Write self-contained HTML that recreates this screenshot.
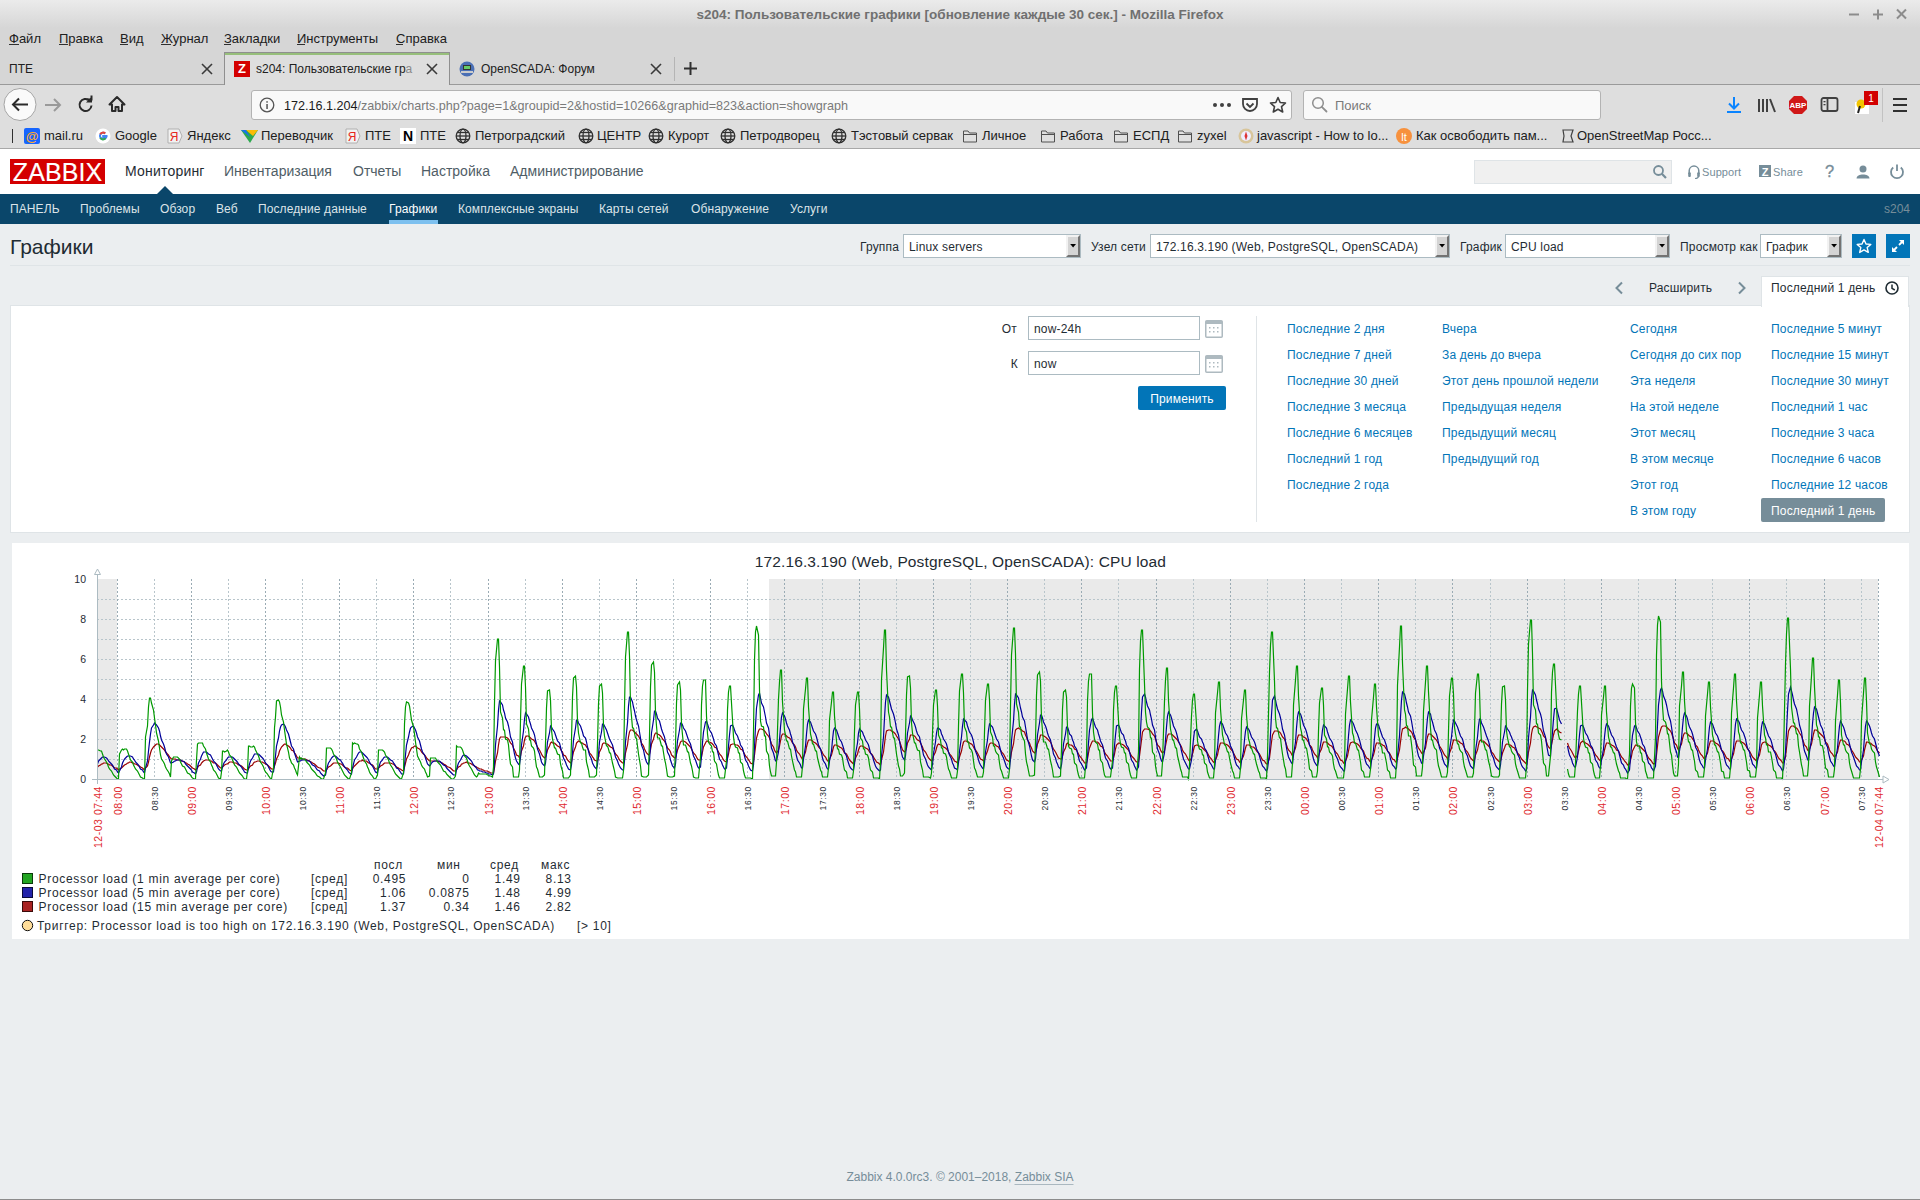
<!DOCTYPE html>
<html><head><meta charset="utf-8"><title>s204</title>
<style>
html,body{margin:0;padding:0;width:1920px;height:1200px;overflow:hidden;background:#ebeef0;font-family:"Liberation Sans", sans-serif;}
.t{position:absolute;white-space:pre;font-family:"Liberation Sans", sans-serif;}
.r{position:absolute;}
svg{position:absolute;overflow:visible;}
</style></head><body>
<div class="r" style="left:0px;top:0px;width:1920px;height:148px;background:linear-gradient(#ebebeb 0px,#d6d6d6 28px,#d6d6d6 148px);"></div><div class="t" style="left:960px;transform:translateX(-50%);top:7.74px;font-size:13.5px;line-height:13.5px;color:#707070;font-weight:bold;">s204: Пользовательские графики [обновление каждые 30 сек.] - Mozilla Firefox</div><svg style="left:1846px;top:6.5px" width="70" height="14"><g stroke="#8c8c8c" stroke-width="2" fill="none"><line x1="3" y1="7.5" x2="13" y2="7.5"/><line x1="27" y1="7.5" x2="37" y2="7.5"/><line x1="32" y1="2.5" x2="32" y2="12.5"/><line x1="51" y1="2.5" x2="60" y2="11.5"/><line x1="60" y1="2.5" x2="51" y2="11.5"/></g></svg><div class="t" style="left:9px;top:32.30px;font-size:13px;line-height:13px;color:#202020;font-weight:normal;">Файл</div><div class="t" style="left:59px;top:32.30px;font-size:13px;line-height:13px;color:#202020;font-weight:normal;">Правка</div><div class="t" style="left:120px;top:32.30px;font-size:13px;line-height:13px;color:#202020;font-weight:normal;">Вид</div><div class="t" style="left:161px;top:32.30px;font-size:13px;line-height:13px;color:#202020;font-weight:normal;">Журнал</div><div class="t" style="left:224px;top:32.30px;font-size:13px;line-height:13px;color:#202020;font-weight:normal;">Закладки</div><div class="t" style="left:297px;top:32.30px;font-size:13px;line-height:13px;color:#202020;font-weight:normal;">Инструменты</div><div class="t" style="left:396px;top:32.30px;font-size:13px;line-height:13px;color:#202020;font-weight:normal;">Справка</div><div class="r" style="left:9px;top:44px;width:10px;height:1px;background:#303030;"></div><div class="r" style="left:59px;top:44px;width:9px;height:1px;background:#303030;"></div><div class="r" style="left:120px;top:44px;width:8px;height:1px;background:#303030;"></div><div class="r" style="left:161px;top:44px;width:10px;height:1px;background:#303030;"></div><div class="r" style="left:224px;top:44px;width:7px;height:1px;background:#303030;"></div><div class="r" style="left:297px;top:44px;width:8px;height:1px;background:#303030;"></div><div class="r" style="left:396px;top:44px;width:7px;height:1px;background:#303030;"></div><div class="r" style="left:0px;top:84px;width:1920px;height:1px;background:#9a9a9a;"></div><div class="r" style="left:224px;top:52px;width:226px;height:33px;background:#dedede;box-sizing:border-box;border:1px solid #8f8f8f;border-bottom:none;"></div><div class="r" style="left:225px;top:53px;width:224px;height:2px;background:#97bf7b;"></div><div class="r" style="left:0px;top:85px;width:1920px;height:63px;background:#dedede;"></div><div class="r" style="left:0px;top:148px;width:1920px;height:1px;background:#a8a8a8;"></div><div class="t" style="left:9px;top:62.93px;font-size:12px;line-height:12px;color:#202020;font-weight:normal;">ПТЕ</div><div class="t" style="left:256px;top:62.93px;font-size:12px;line-height:12px;color:#202020;font-weight:normal;">s204: Пользовательские гр<span style="color:#8a8a8a">а</span></div><div class="t" style="left:481px;top:62.93px;font-size:12px;line-height:12px;color:#202020;font-weight:normal;">OpenSCADA: Форум</div><svg style="left:201px;top:63px" width="12" height="12"><g stroke="#3a3a3a" stroke-width="1.6"><line x1="1" y1="1" x2="11" y2="11"/><line x1="11" y1="1" x2="1" y2="11"/></g></svg><svg style="left:426px;top:63px" width="12" height="12"><g stroke="#3a3a3a" stroke-width="1.6"><line x1="1" y1="1" x2="11" y2="11"/><line x1="11" y1="1" x2="1" y2="11"/></g></svg><svg style="left:650px;top:63px" width="12" height="12"><g stroke="#3a3a3a" stroke-width="1.6"><line x1="1" y1="1" x2="11" y2="11"/><line x1="11" y1="1" x2="1" y2="11"/></g></svg><div class="r" style="left:234px;top:61px;width:16px;height:16px;background:#d40000;"></div><div class="t" style="left:242px;transform:translateX(-50%);top:61.80px;font-size:13px;line-height:13px;color:#fff;font-weight:bold;">Z</div><svg style="left:459px;top:61px" width="16" height="16"><circle cx="8" cy="8" r="7.5" fill="#4a6fb5"/><rect x="4" y="4" width="8" height="5" fill="#333"/><rect x="5" y="5" width="6" height="3" fill="#6c6"/><rect x="2" y="10" width="12" height="2" fill="#ccc"/></svg><div class="r" style="left:674px;top:57px;width:1px;height:24px;background:#b5b5b5;"></div><svg style="left:683px;top:61px" width="15" height="15"><g stroke="#303030" stroke-width="2"><line x1="7.5" y1="1" x2="7.5" y2="14"/><line x1="1" y1="7.5" x2="14" y2="7.5"/></g></svg><svg style="left:2px;top:87px" width="36" height="36"><circle cx="18" cy="17.5" r="16" fill="#fafafa" stroke="#a5a5a5" stroke-width="1"/><g stroke="#2a2a2a" stroke-width="2" fill="none"><line x1="11" y1="17.5" x2="26" y2="17.5"/><polyline points="17,11.5 11,17.5 17,23.5"/></g></svg><svg style="left:44px;top:96px" width="18" height="18"><g stroke="#9a9a9a" stroke-width="2" fill="none"><line x1="1" y1="9" x2="16" y2="9"/><polyline points="10,3 16,9 10,15"/></g></svg><svg style="left:77px;top:96px" width="18" height="18"><g stroke="#2a2a2a" stroke-width="2" fill="none"><path d="M14.5 9.5 A6 6 0 1 1 12.5 4.5"/><polyline points="9.5,3.5 14.5,3.5 14.5,-0.5" /></g><polygon points="15,0.5 15,6.5 9,6.5" fill="#2a2a2a"/></svg><svg style="left:108px;top:95px" width="18" height="18"><path d="M9 2 L16.5 9.5 L14 9.5 L14 16 L10.5 16 L10.5 12 L7.5 12 L7.5 16 L4 16 L4 9.5 L1.5 9.5 Z" fill="none" stroke="#2a2a2a" stroke-width="2" stroke-linejoin="round"/></svg><div class="r" style="left:251px;top:90px;width:1041px;height:30px;background:#f9f9f9;box-sizing:border-box;border:1px solid #b3b3b3;border-radius:3px;"></div><svg style="left:259px;top:97px" width="16" height="16"><circle cx="8" cy="8" r="6.8" fill="none" stroke="#555" stroke-width="1.3"/><rect x="7.3" y="7" width="1.5" height="5" fill="#555"/><rect x="7.3" y="4.2" width="1.5" height="1.5" fill="#555"/></svg><div class="t" style="left:284px;top:100.16px;font-size:12.6px;line-height:12.6px;color:#1a1a1a;font-weight:normal;">172.16.1.204<span style="color:#7a7a7a">/zabbix/charts.php?page=1&amp;groupid=2&amp;hostid=10266&amp;graphid=823&amp;action=showgraph</span></div><svg style="left:1212px;top:98px" width="20" height="14"><circle cx="3" cy="7" r="2" fill="#404040"/><circle cx="10" cy="7" r="2" fill="#404040"/><circle cx="17" cy="7" r="2" fill="#404040"/></svg><svg style="left:1241px;top:96px" width="18" height="18"><path d="M2 3 H16 V8 A7 7 0 0 1 2 8 Z" fill="none" stroke="#404040" stroke-width="1.8"/><polyline points="5.5,7.5 9,11 12.5,7.5" fill="none" stroke="#404040" stroke-width="1.8"/></svg><svg style="left:1269px;top:96px" width="18" height="18"><polygon points="9,1.5 11.2,6.5 16.5,7 12.5,10.6 13.7,16 9,13.2 4.3,16 5.5,10.6 1.5,7 6.8,6.5" fill="none" stroke="#404040" stroke-width="1.6" stroke-linejoin="round"/></svg><div class="r" style="left:1303px;top:90px;width:298px;height:30px;background:#f9f9f9;box-sizing:border-box;border:1px solid #b3b3b3;border-radius:3px;"></div><svg style="left:1311px;top:96px" width="18" height="18"><circle cx="7" cy="7" r="5.3" fill="none" stroke="#8e8e8e" stroke-width="1.5"/><line x1="10.8" y1="10.8" x2="15.5" y2="15.5" stroke="#8e8e8e" stroke-width="1.8" stroke-linecap="round"/></svg><div class="t" style="left:1335px;top:99.00px;font-size:13px;line-height:13px;color:#7a7a7a;font-weight:normal;">Поиск</div><svg style="left:1724px;top:95px" width="20" height="20"><g stroke="#0a84ff" stroke-width="2" fill="none"><line x1="10" y1="2" x2="10" y2="13"/><polyline points="5,8.5 10,13.5 15,8.5"/><line x1="3" y1="17" x2="17" y2="17"/></g></svg><svg style="left:1757px;top:96px" width="20" height="18"><g fill="#404040"><rect x="1" y="3" width="2" height="13"/><rect x="5" y="3" width="2" height="13"/><rect x="9" y="3" width="2" height="13"/></g><line x1="13" y1="3" x2="18" y2="16" stroke="#404040" stroke-width="2"/></svg><svg style="left:1788px;top:95px" width="20" height="20"><polygon points="6,1 14,1 19,6 19,14 14,19 6,19 1,14 1,6" fill="#d01818"/><text x="10" y="13.3" font-family="Liberation Sans" font-weight="bold" font-size="8" fill="#fff" text-anchor="middle">ABP</text></svg><svg style="left:1820px;top:96px" width="20" height="18"><rect x="1.5" y="2" width="16" height="13" rx="2" fill="none" stroke="#404040" stroke-width="1.8"/><line x1="7.5" y1="2" x2="7.5" y2="15" stroke="#404040" stroke-width="1.8"/><rect x="3.5" y="5" width="2" height="1.3" fill="#404040"/><rect x="3.5" y="8" width="2" height="1.3" fill="#404040"/></svg><svg style="left:1853px;top:90px" width="28" height="24"><rect x="2" y="12" width="14" height="12" fill="#fff"/><circle cx="8" cy="14" r="4.5" fill="#f2c400"/><line x1="7" y1="16" x2="5" y2="23" stroke="#222" stroke-width="2"/><rect x="11" y="1" width="14" height="14" fill="#d20000"/><text x="18" y="12" font-family="Liberation Sans" font-size="10" fill="#fff" text-anchor="middle">1</text></svg><div class="r" style="left:1882px;top:88px;width:1px;height:34px;background:#c2c2c2;"></div><svg style="left:1892px;top:97px" width="18" height="16"><g fill="#303030"><rect x="1" y="1" width="14" height="2"/><rect x="1" y="7" width="14" height="2"/><rect x="1" y="13" width="14" height="2"/></g></svg><div class="r" style="left:12px;top:129px;width:1px;height:14px;background:#303030;"></div><div class="t" style="left:44px;top:129.30px;font-size:13px;line-height:13px;color:#202020;font-weight:normal;">mail.ru</div><svg style="left:24px;top:128px" width="16" height="16"><rect width="16" height="16" rx="2" fill="#1665ff"/><text x="8" y="12.5" font-family="Liberation Sans" font-weight="bold" font-size="13" fill="#ffa930" text-anchor="middle">@</text></svg><div class="t" style="left:115px;top:129.30px;font-size:13px;line-height:13px;color:#202020;font-weight:normal;">Google</div><svg style="left:95px;top:128px" width="16" height="16"><circle cx="8" cy="8" r="7.5" fill="#fff"/><path d="M12.5 8 H8.2 V9.6 H10.9 A3.2 3.2 0 1 1 10.2 5.4" fill="none" stroke="#4285f4" stroke-width="2"/><path d="M5.2 6.3 A3.2 3.2 0 0 1 10.2 5.4" fill="none" stroke="#ea4335" stroke-width="2"/><path d="M5.2 9.8 A3.2 3.2 0 0 0 10.5 10.2" fill="none" stroke="#34a853" stroke-width="2"/></svg><div class="t" style="left:187px;top:129.30px;font-size:13px;line-height:13px;color:#202020;font-weight:normal;">Яндекс</div><svg style="left:167px;top:128px" width="16" height="16"><path d="M1 1 H12 L15 8 L12 15 H1 Z" fill="#f2f2f2" stroke="#b0b0b0" stroke-width="1"/><text x="7" y="13" font-family="Liberation Sans" font-size="12" fill="#e52620" text-anchor="middle">Я</text></svg><div class="t" style="left:261px;top:129.30px;font-size:13px;line-height:13px;color:#202020;font-weight:normal;">Переводчик</div><svg style="left:241px;top:128px" width="17" height="16"><polygon points="0,2 17,2 9,15" fill="#2da94f"/><polygon points="5,2 17,2 12,8" fill="#fbbc04"/><polygon points="0,2 5,2 9,9" fill="#1a73e8"/></svg><div class="t" style="left:365px;top:129.30px;font-size:13px;line-height:13px;color:#202020;font-weight:normal;">ПТЕ</div><svg style="left:345px;top:128px" width="16" height="16"><path d="M1 1 H12 L15 8 L12 15 H1 Z" fill="#f2f2f2" stroke="#b0b0b0" stroke-width="1"/><text x="7" y="13" font-family="Liberation Sans" font-size="12" fill="#e52620" text-anchor="middle">Я</text></svg><div class="t" style="left:420px;top:129.30px;font-size:13px;line-height:13px;color:#202020;font-weight:normal;">ПТЕ</div><svg style="left:400px;top:128px" width="16" height="16"><rect width="16" height="16" fill="#fff"/><text x="8" y="13" font-family="Liberation Sans" font-weight="bold" font-size="14" fill="#000" text-anchor="middle">N</text></svg><div class="t" style="left:475px;top:129.30px;font-size:13px;line-height:13px;color:#202020;font-weight:normal;">Петроградский</div><svg style="left:455px;top:128px" width="16" height="16"><g fill="none" stroke="#303030" stroke-width="1.3"><circle cx="8" cy="8" r="6.8"/><ellipse cx="8" cy="8" rx="3" ry="6.8"/><line x1="1.2" y1="8" x2="14.8" y2="8"/><line x1="2.2" y1="4.5" x2="13.8" y2="4.5"/><line x1="2.2" y1="11.5" x2="13.8" y2="11.5"/></g></svg><div class="t" style="left:597px;top:129.30px;font-size:13px;line-height:13px;color:#202020;font-weight:normal;">ЦЕНТР</div><svg style="left:578px;top:128px" width="16" height="16"><g fill="none" stroke="#303030" stroke-width="1.3"><circle cx="8" cy="8" r="6.8"/><ellipse cx="8" cy="8" rx="3" ry="6.8"/><line x1="1.2" y1="8" x2="14.8" y2="8"/><line x1="2.2" y1="4.5" x2="13.8" y2="4.5"/><line x1="2.2" y1="11.5" x2="13.8" y2="11.5"/></g></svg><div class="t" style="left:668px;top:129.30px;font-size:13px;line-height:13px;color:#202020;font-weight:normal;">Курорт</div><svg style="left:648px;top:128px" width="16" height="16"><g fill="none" stroke="#303030" stroke-width="1.3"><circle cx="8" cy="8" r="6.8"/><ellipse cx="8" cy="8" rx="3" ry="6.8"/><line x1="1.2" y1="8" x2="14.8" y2="8"/><line x1="2.2" y1="4.5" x2="13.8" y2="4.5"/><line x1="2.2" y1="11.5" x2="13.8" y2="11.5"/></g></svg><div class="t" style="left:740px;top:129.30px;font-size:13px;line-height:13px;color:#202020;font-weight:normal;">Петродворец</div><svg style="left:720px;top:128px" width="16" height="16"><g fill="none" stroke="#303030" stroke-width="1.3"><circle cx="8" cy="8" r="6.8"/><ellipse cx="8" cy="8" rx="3" ry="6.8"/><line x1="1.2" y1="8" x2="14.8" y2="8"/><line x1="2.2" y1="4.5" x2="13.8" y2="4.5"/><line x1="2.2" y1="11.5" x2="13.8" y2="11.5"/></g></svg><div class="t" style="left:851px;top:129.30px;font-size:13px;line-height:13px;color:#202020;font-weight:normal;">Тэстовый сервак</div><svg style="left:831px;top:128px" width="16" height="16"><g fill="none" stroke="#303030" stroke-width="1.3"><circle cx="8" cy="8" r="6.8"/><ellipse cx="8" cy="8" rx="3" ry="6.8"/><line x1="1.2" y1="8" x2="14.8" y2="8"/><line x1="2.2" y1="4.5" x2="13.8" y2="4.5"/><line x1="2.2" y1="11.5" x2="13.8" y2="11.5"/></g></svg><div class="t" style="left:982px;top:129.30px;font-size:13px;line-height:13px;color:#202020;font-weight:normal;">Личное</div><svg style="left:962px;top:128px" width="16" height="16"><path d="M1.5 3 H6 L7.5 5 H14.5 V14 H1.5 Z" fill="#e0e0e0" stroke="#505050" stroke-width="1"/><line x1="1.5" y1="6.5" x2="14.5" y2="6.5" stroke="#505050" stroke-width="1"/></svg><div class="t" style="left:1060px;top:129.30px;font-size:13px;line-height:13px;color:#202020;font-weight:normal;">Работа</div><svg style="left:1040px;top:128px" width="16" height="16"><path d="M1.5 3 H6 L7.5 5 H14.5 V14 H1.5 Z" fill="#e0e0e0" stroke="#505050" stroke-width="1"/><line x1="1.5" y1="6.5" x2="14.5" y2="6.5" stroke="#505050" stroke-width="1"/></svg><div class="t" style="left:1133px;top:129.30px;font-size:13px;line-height:13px;color:#202020;font-weight:normal;">ЕСПД</div><svg style="left:1113px;top:128px" width="16" height="16"><path d="M1.5 3 H6 L7.5 5 H14.5 V14 H1.5 Z" fill="#e0e0e0" stroke="#505050" stroke-width="1"/><line x1="1.5" y1="6.5" x2="14.5" y2="6.5" stroke="#505050" stroke-width="1"/></svg><div class="t" style="left:1197px;top:129.30px;font-size:13px;line-height:13px;color:#202020;font-weight:normal;">zyxel</div><svg style="left:1177px;top:128px" width="16" height="16"><path d="M1.5 3 H6 L7.5 5 H14.5 V14 H1.5 Z" fill="#e0e0e0" stroke="#505050" stroke-width="1"/><line x1="1.5" y1="6.5" x2="14.5" y2="6.5" stroke="#505050" stroke-width="1"/></svg><div class="t" style="left:1257px;top:129.30px;font-size:13px;line-height:13px;color:#202020;font-weight:normal;">javascript - How to lo...</div><svg style="left:1238px;top:128px" width="16" height="16"><circle cx="8" cy="8" r="7.5" fill="#d8c59a"/><circle cx="8" cy="8" r="5" fill="#eef"/><polygon points="8,3.5 9.5,8 8,12.5 6.5,8" fill="#d33"/></svg><div class="t" style="left:1416px;top:129.30px;font-size:13px;line-height:13px;color:#202020;font-weight:normal;">Как освободить пам...</div><svg style="left:1396px;top:128px" width="16" height="16"><circle cx="8" cy="8" r="8" fill="#f7913d"/><text x="8" y="12.5" font-family="Liberation Sans" font-size="11" fill="#fff" text-anchor="middle">lt</text></svg><div class="t" style="left:1577px;top:129.30px;font-size:13px;line-height:13px;color:#202020;font-weight:normal;">OpenStreetMap Росс...</div><svg style="left:1560px;top:128px" width="16" height="16"><path d="M3 2 H13 L11 8 L13 14 H3 L4 8 Z" fill="none" stroke="#404040" stroke-width="1.2"/></svg><div class="r" style="left:0px;top:149px;width:1920px;height:45px;background:#ffffff;"></div><div class="r" style="left:10px;top:159px;width:95px;height:25px;background:#d40000;"></div><div class="t" style="left:12.8px;top:159.5px;font-size:25px;line-height:25px;color:#fff;letter-spacing:0.1px;-webkit-text-stroke:0.15px #fff;">ZABBIX</div><div class="t" style="left:125px;top:164.17px;font-size:14px;line-height:14px;color:#1f2c33;font-weight:normal;letter-spacing:0.2px;">Мониторинг</div><div class="t" style="left:224px;top:164.17px;font-size:14px;line-height:14px;color:#4f5d66;font-weight:normal;">Инвентаризация</div><div class="t" style="left:353px;top:164.17px;font-size:14px;line-height:14px;color:#4f5d66;font-weight:normal;">Отчеты</div><div class="t" style="left:421px;top:164.17px;font-size:14px;line-height:14px;color:#4f5d66;font-weight:normal;">Настройка</div><div class="t" style="left:510px;top:164.17px;font-size:14px;line-height:14px;color:#4f5d66;font-weight:normal;">Администрирование</div><svg style="left:157px;top:186px" width="16" height="8"><polygon points="0,8 8,0 16,8" fill="#0a466a"/></svg><div class="r" style="left:1474px;top:160px;width:198px;height:24px;background:#f0f0f0;box-sizing:border-box;border:1px solid #dfe4e7;"></div><svg style="left:1652px;top:164px" width="16" height="16"><circle cx="6.5" cy="6.5" r="4.5" fill="none" stroke="#768d99" stroke-width="1.8"/><line x1="9.8" y1="9.8" x2="14" y2="14" stroke="#768d99" stroke-width="2.2"/></svg><svg style="left:1687px;top:164px" width="14" height="16"><path d="M2.2 10 V6.8 A4.8 4.8 0 0 1 11.8 6.8 V10" fill="none" stroke="#768d99" stroke-width="1.5"/><rect x="1.2" y="8.3" width="2.6" height="4.6" rx="1" fill="#768d99"/><rect x="10.2" y="8.3" width="2.6" height="4.6" rx="1" fill="#768d99"/><path d="M11.5 12.5 Q11 14.5 8 14.5" fill="none" stroke="#768d99" stroke-width="1.2"/></svg><div class="t" style="left:1702px;top:166.76px;font-size:11px;line-height:11px;color:#768d99;font-weight:normal;letter-spacing:0.1px;">Support</div><svg style="left:1759px;top:165px" width="12" height="12"><rect width="12" height="12" fill="#768d99"/><text x="6" y="10.5" font-family="Liberation Sans" font-weight="bold" font-size="11" fill="#fff" text-anchor="middle">Z</text></svg><div class="t" style="left:1773px;top:166.76px;font-size:11px;line-height:11px;color:#768d99;font-weight:normal;letter-spacing:0.1px;">Share</div><div class="t" style="left:1829.5px;transform:translateX(-50%);top:162.85px;font-size:16.5px;line-height:16.5px;color:#768d99;font-weight:normal;-webkit-text-stroke:0.3px #768d99;">?</div><svg style="left:1855px;top:164px" width="16" height="16"><circle cx="8" cy="5" r="3.5" fill="#768d99"/><path d="M1.5 14.5 C1.5 9 14.5 9 14.5 14.5 Z" fill="#768d99"/></svg><svg style="left:1889px;top:163px" width="16" height="16"><path d="M4.2 4.5 A6 6 0 1 0 11.8 4.5" fill="none" stroke="#768d99" stroke-width="1.8"/><line x1="8" y1="1.5" x2="8" y2="8" stroke="#768d99" stroke-width="1.8"/></svg><div class="r" style="left:0px;top:194px;width:1920px;height:30px;background:#0a466a;"></div><div class="t" style="left:10px;top:202.93px;font-size:12px;line-height:12px;color:#dce4e8;font-weight:normal;letter-spacing:0.1px;">ПАНЕЛЬ</div><div class="t" style="left:80px;top:202.93px;font-size:12px;line-height:12px;color:#dce4e8;font-weight:normal;letter-spacing:0.1px;">Проблемы</div><div class="t" style="left:160px;top:202.93px;font-size:12px;line-height:12px;color:#dce4e8;font-weight:normal;letter-spacing:0.1px;">Обзор</div><div class="t" style="left:216px;top:202.93px;font-size:12px;line-height:12px;color:#dce4e8;font-weight:normal;letter-spacing:0.1px;">Веб</div><div class="t" style="left:258px;top:202.93px;font-size:12px;line-height:12px;color:#dce4e8;font-weight:normal;letter-spacing:0.1px;">Последние данные</div><div class="t" style="left:458px;top:202.93px;font-size:12px;line-height:12px;color:#dce4e8;font-weight:normal;letter-spacing:0.1px;">Комплексные экраны</div><div class="t" style="left:599px;top:202.93px;font-size:12px;line-height:12px;color:#dce4e8;font-weight:normal;letter-spacing:0.1px;">Карты сетей</div><div class="t" style="left:691px;top:202.93px;font-size:12px;line-height:12px;color:#dce4e8;font-weight:normal;letter-spacing:0.1px;">Обнаружение</div><div class="t" style="left:790px;top:202.93px;font-size:12px;line-height:12px;color:#dce4e8;font-weight:normal;letter-spacing:0.1px;">Услуги</div><div class="t" style="left:389px;top:202.93px;font-size:12px;line-height:12px;color:#ffffff;font-weight:normal;letter-spacing:0.1px;">Графики</div><div class="r" style="left:389px;top:220px;width:49px;height:4px;background:#7dc0ef;"></div><div class="t" style="right:10px;top:202.93px;font-size:12px;line-height:12px;color:#768d99;font-weight:normal;">s204</div><div class="t" style="left:10px;top:236.26px;font-size:21px;line-height:21px;color:#1f2c33;font-weight:normal;">Графики</div><div class="t" style="left:860px;top:241.43px;font-size:12px;line-height:12px;color:#1f2c33;font-weight:normal;letter-spacing:0.17px;">Группа</div><div class="r" style="left:903px;top:234px;width:178px;height:24px;background:#fff;box-sizing:border-box;border:1px solid #acbbc2;"></div><div class="t" style="left:909px;top:241.43px;font-size:12px;line-height:12px;color:#1f2c33;font-weight:normal;letter-spacing:0.17px;">Linux servers</div><div class="r" style="left:1066px;top:235px;width:14px;height:22px;background:#d4d4d4;box-sizing:border-box;border-left:2px solid #f2f2f2;border-top:2px solid #f2f2f2;border-right:2px solid #737373;border-bottom:2px solid #737373;"></div><svg style="left:1070px;top:244px" width="7" height="4"><polygon points="0.2,0 6,0 3.1,3.6" fill="#000"/></svg><div class="t" style="left:1091px;top:241.43px;font-size:12px;line-height:12px;color:#1f2c33;font-weight:normal;letter-spacing:0.17px;">Узел сети</div><div class="r" style="left:1150px;top:234px;width:300px;height:24px;background:#fff;box-sizing:border-box;border:1px solid #acbbc2;"></div><div class="t" style="left:1156px;top:241.43px;font-size:12px;line-height:12px;color:#1f2c33;font-weight:normal;letter-spacing:0.17px;">172.16.3.190 (Web, PostgreSQL, OpenSCADA)</div><div class="r" style="left:1435px;top:235px;width:14px;height:22px;background:#d4d4d4;box-sizing:border-box;border-left:2px solid #f2f2f2;border-top:2px solid #f2f2f2;border-right:2px solid #737373;border-bottom:2px solid #737373;"></div><svg style="left:1439px;top:244px" width="7" height="4"><polygon points="0.2,0 6,0 3.1,3.6" fill="#000"/></svg><div class="t" style="left:1460px;top:241.43px;font-size:12px;line-height:12px;color:#1f2c33;font-weight:normal;letter-spacing:0.17px;">График</div><div class="r" style="left:1505px;top:234px;width:165px;height:24px;background:#fff;box-sizing:border-box;border:1px solid #acbbc2;"></div><div class="t" style="left:1511px;top:241.43px;font-size:12px;line-height:12px;color:#1f2c33;font-weight:normal;letter-spacing:0.17px;">CPU load</div><div class="r" style="left:1655px;top:235px;width:14px;height:22px;background:#d4d4d4;box-sizing:border-box;border-left:2px solid #f2f2f2;border-top:2px solid #f2f2f2;border-right:2px solid #737373;border-bottom:2px solid #737373;"></div><svg style="left:1659px;top:244px" width="7" height="4"><polygon points="0.2,0 6,0 3.1,3.6" fill="#000"/></svg><div class="t" style="left:1680px;top:241.43px;font-size:12px;line-height:12px;color:#1f2c33;font-weight:normal;letter-spacing:0.17px;">Просмотр как</div><div class="r" style="left:1760px;top:234px;width:82px;height:24px;background:#fff;box-sizing:border-box;border:1px solid #acbbc2;"></div><div class="t" style="left:1766px;top:241.43px;font-size:12px;line-height:12px;color:#1f2c33;font-weight:normal;letter-spacing:0.17px;">График</div><div class="r" style="left:1827px;top:235px;width:14px;height:22px;background:#d4d4d4;box-sizing:border-box;border-left:2px solid #f2f2f2;border-top:2px solid #f2f2f2;border-right:2px solid #737373;border-bottom:2px solid #737373;"></div><svg style="left:1831px;top:244px" width="7" height="4"><polygon points="0.2,0 6,0 3.1,3.6" fill="#000"/></svg><div class="r" style="left:1852px;top:234px;width:24px;height:24px;background:#0275b8;"></div><svg style="left:1856px;top:238px" width="16" height="16"><polygon points="8,1.5 10,6 14.8,6.4 11.2,9.6 12.3,14.4 8,11.9 3.7,14.4 4.8,9.6 1.2,6.4 6,6" fill="none" stroke="#fff" stroke-width="1.4" stroke-linejoin="round"/></svg><div class="r" style="left:1886px;top:234px;width:24px;height:24px;background:#0275b8;"></div><svg style="left:1890px;top:238px" width="16" height="16"><g stroke="#fff" stroke-width="1.8" fill="none"><line x1="9" y1="7" x2="13" y2="3"/><line x1="3" y1="13" x2="7" y2="9"/></g><polygon points="9,2 14,2 14,7" fill="#fff"/><polygon points="2,9 2,14 7,14" fill="#fff"/></svg><div class="r" style="left:10px;top:265px;width:1900px;height:1px;background:#dfe4e7;"></div><svg style="left:1613px;top:281px" width="12" height="14"><polyline points="9,1.5 3.5,7 9,12.5" fill="none" stroke="#768d99" stroke-width="2"/></svg><div class="t" style="left:1649px;top:282.43px;font-size:12px;line-height:12px;color:#1f2c33;font-weight:normal;letter-spacing:0.17px;">Расширить</div><svg style="left:1736px;top:281px" width="12" height="14"><polyline points="3,1.5 8.5,7 3,12.5" fill="none" stroke="#768d99" stroke-width="2"/></svg><div class="r" style="left:10px;top:305px;width:1900px;height:228px;background:#fff;box-sizing:border-box;border:1px solid #dfe4e7;"></div><div class="r" style="left:1761px;top:276px;width:148px;height:31px;background:#fff;box-sizing:border-box;border:1px solid #dfe4e7;border-bottom:none;"></div><div class="t" style="left:1771px;top:282.43px;font-size:12px;line-height:12px;color:#1f2c33;font-weight:normal;letter-spacing:0.17px;">Последний 1 день</div><svg style="left:1884px;top:280px" width="16" height="16"><circle cx="8" cy="8" r="6" fill="none" stroke="#1f2c33" stroke-width="1.6"/><polyline points="8,4.5 8,8.3 10.8,10" fill="none" stroke="#1f2c33" stroke-width="1.5"/></svg><div class="t" style="right:903px;top:323.43px;font-size:12px;line-height:12px;color:#1f2c33;font-weight:normal;letter-spacing:0.17px;">От</div><div class="t" style="right:902px;top:358.43px;font-size:12px;line-height:12px;color:#1f2c33;font-weight:normal;letter-spacing:0.17px;">К</div><div class="r" style="left:1028px;top:316px;width:172px;height:24px;background:#fff;box-sizing:border-box;border:1px solid #acbbc2;"></div><div class="t" style="left:1034px;top:323.43px;font-size:12px;line-height:12px;color:#1f2c33;font-weight:normal;letter-spacing:0.17px;">now-24h</div><svg style="left:1205px;top:320px" width="18" height="18"><rect x="0.75" y="0.75" width="16.5" height="16.5" rx="1" fill="#fff" stroke="#aebac0" stroke-width="1.5"/><rect x="1" y="1" width="16" height="3" fill="#aebac0"/><g fill="#aebac0"><rect x="4" y="7" width="1.5" height="1.5"/><rect x="8" y="7" width="1.5" height="1.5"/><rect x="12" y="7" width="1.5" height="1.5"/><rect x="4" y="11" width="1.5" height="1.5"/><rect x="8" y="11" width="1.5" height="1.5"/><rect x="12" y="11" width="1.5" height="1.5"/></g></svg><div class="r" style="left:1028px;top:351px;width:172px;height:24px;background:#fff;box-sizing:border-box;border:1px solid #acbbc2;"></div><div class="t" style="left:1034px;top:358.43px;font-size:12px;line-height:12px;color:#1f2c33;font-weight:normal;letter-spacing:0.17px;">now</div><svg style="left:1205px;top:355px" width="18" height="18"><rect x="0.75" y="0.75" width="16.5" height="16.5" rx="1" fill="#fff" stroke="#aebac0" stroke-width="1.5"/><rect x="1" y="1" width="16" height="3" fill="#aebac0"/><g fill="#aebac0"><rect x="4" y="7" width="1.5" height="1.5"/><rect x="8" y="7" width="1.5" height="1.5"/><rect x="12" y="7" width="1.5" height="1.5"/><rect x="4" y="11" width="1.5" height="1.5"/><rect x="8" y="11" width="1.5" height="1.5"/><rect x="12" y="11" width="1.5" height="1.5"/></g></svg><div class="r" style="left:1138px;top:386px;width:88px;height:24px;background:#0275b8;border-radius:2px;"></div><div class="t" style="left:1182px;transform:translateX(-50%);top:393.43px;font-size:12px;line-height:12px;color:#fff;font-weight:normal;letter-spacing:0.17px;">Применить</div><div class="r" style="left:1256px;top:316px;width:1px;height:206px;background:#dfe4e7;"></div><div class="t" style="left:1287px;top:323.43px;font-size:12px;line-height:12px;color:#0275b8;font-weight:normal;letter-spacing:0.17px;">Последние 2 дня</div><div class="t" style="left:1287px;top:349.43px;font-size:12px;line-height:12px;color:#0275b8;font-weight:normal;letter-spacing:0.17px;">Последние 7 дней</div><div class="t" style="left:1287px;top:375.43px;font-size:12px;line-height:12px;color:#0275b8;font-weight:normal;letter-spacing:0.17px;">Последние 30 дней</div><div class="t" style="left:1287px;top:401.43px;font-size:12px;line-height:12px;color:#0275b8;font-weight:normal;letter-spacing:0.17px;">Последние 3 месяца</div><div class="t" style="left:1287px;top:427.43px;font-size:12px;line-height:12px;color:#0275b8;font-weight:normal;letter-spacing:0.17px;">Последние 6 месяцев</div><div class="t" style="left:1287px;top:453.43px;font-size:12px;line-height:12px;color:#0275b8;font-weight:normal;letter-spacing:0.17px;">Последний 1 год</div><div class="t" style="left:1287px;top:479.43px;font-size:12px;line-height:12px;color:#0275b8;font-weight:normal;letter-spacing:0.17px;">Последние 2 года</div><div class="t" style="left:1442px;top:323.43px;font-size:12px;line-height:12px;color:#0275b8;font-weight:normal;letter-spacing:0.17px;">Вчера</div><div class="t" style="left:1442px;top:349.43px;font-size:12px;line-height:12px;color:#0275b8;font-weight:normal;letter-spacing:0.17px;">За день до вчера</div><div class="t" style="left:1442px;top:375.43px;font-size:12px;line-height:12px;color:#0275b8;font-weight:normal;letter-spacing:0.17px;">Этот день прошлой недели</div><div class="t" style="left:1442px;top:401.43px;font-size:12px;line-height:12px;color:#0275b8;font-weight:normal;letter-spacing:0.17px;">Предыдущая неделя</div><div class="t" style="left:1442px;top:427.43px;font-size:12px;line-height:12px;color:#0275b8;font-weight:normal;letter-spacing:0.17px;">Предыдущий месяц</div><div class="t" style="left:1442px;top:453.43px;font-size:12px;line-height:12px;color:#0275b8;font-weight:normal;letter-spacing:0.17px;">Предыдущий год</div><div class="t" style="left:1630px;top:323.43px;font-size:12px;line-height:12px;color:#0275b8;font-weight:normal;letter-spacing:0.17px;">Сегодня</div><div class="t" style="left:1630px;top:349.43px;font-size:12px;line-height:12px;color:#0275b8;font-weight:normal;letter-spacing:0.17px;">Сегодня до сих пор</div><div class="t" style="left:1630px;top:375.43px;font-size:12px;line-height:12px;color:#0275b8;font-weight:normal;letter-spacing:0.17px;">Эта неделя</div><div class="t" style="left:1630px;top:401.43px;font-size:12px;line-height:12px;color:#0275b8;font-weight:normal;letter-spacing:0.17px;">На этой неделе</div><div class="t" style="left:1630px;top:427.43px;font-size:12px;line-height:12px;color:#0275b8;font-weight:normal;letter-spacing:0.17px;">Этот месяц</div><div class="t" style="left:1630px;top:453.43px;font-size:12px;line-height:12px;color:#0275b8;font-weight:normal;letter-spacing:0.17px;">В этом месяце</div><div class="t" style="left:1630px;top:479.43px;font-size:12px;line-height:12px;color:#0275b8;font-weight:normal;letter-spacing:0.17px;">Этот год</div><div class="t" style="left:1630px;top:505.43px;font-size:12px;line-height:12px;color:#0275b8;font-weight:normal;letter-spacing:0.17px;">В этом году</div><div class="t" style="left:1771px;top:323.43px;font-size:12px;line-height:12px;color:#0275b8;font-weight:normal;letter-spacing:0.17px;">Последние 5 минут</div><div class="t" style="left:1771px;top:349.43px;font-size:12px;line-height:12px;color:#0275b8;font-weight:normal;letter-spacing:0.17px;">Последние 15 минут</div><div class="t" style="left:1771px;top:375.43px;font-size:12px;line-height:12px;color:#0275b8;font-weight:normal;letter-spacing:0.17px;">Последние 30 минут</div><div class="t" style="left:1771px;top:401.43px;font-size:12px;line-height:12px;color:#0275b8;font-weight:normal;letter-spacing:0.17px;">Последний 1 час</div><div class="t" style="left:1771px;top:427.43px;font-size:12px;line-height:12px;color:#0275b8;font-weight:normal;letter-spacing:0.17px;">Последние 3 часа</div><div class="t" style="left:1771px;top:453.43px;font-size:12px;line-height:12px;color:#0275b8;font-weight:normal;letter-spacing:0.17px;">Последние 6 часов</div><div class="t" style="left:1771px;top:479.43px;font-size:12px;line-height:12px;color:#0275b8;font-weight:normal;letter-spacing:0.17px;">Последние 12 часов</div><div class="r" style="left:1761px;top:498px;width:124px;height:24px;background:#768d99;border-radius:2px;"></div><div class="t" style="left:1771px;top:505.43px;font-size:12px;line-height:12px;color:#fff;font-weight:normal;letter-spacing:0.17px;">Последний 1 день</div><div class="t" style="left:960px;transform:translateX(-50%);top:1171.43px;font-size:12px;line-height:12px;color:#768d99;font-weight:normal;">Zabbix 4.0.0rc3. © 2001–2018, <span style="border-bottom:1px solid #aab8c0">Zabbix SIA</span></div><div class="r" style="left:0px;top:1199px;width:1920px;height:1px;background:#8c8c8c;"></div><div class="r" style="left:12px;top:543px;width:1897px;height:396px;background:#fff;"></div><svg style="left:0px;top:0px" width="1920" height="1200" shape-rendering="crispEdges"><rect x="98" y="579" width="19" height="200" fill="#eaeaea"/><rect x="769" y="579" width="1109" height="200" fill="#eaeaea"/><line x1="97" y1="759.5" x2="1879" y2="759.5" stroke="#b8c5cb" stroke-width="1" stroke-dasharray="2 2"/><line x1="97" y1="739.5" x2="1879" y2="739.5" stroke="#b8c5cb" stroke-width="1" stroke-dasharray="2 2"/><line x1="97" y1="719.5" x2="1879" y2="719.5" stroke="#b8c5cb" stroke-width="1" stroke-dasharray="2 2"/><line x1="97" y1="699.5" x2="1879" y2="699.5" stroke="#b8c5cb" stroke-width="1" stroke-dasharray="2 2"/><line x1="97" y1="679.5" x2="1879" y2="679.5" stroke="#b8c5cb" stroke-width="1" stroke-dasharray="2 2"/><line x1="97" y1="659.5" x2="1879" y2="659.5" stroke="#b8c5cb" stroke-width="1" stroke-dasharray="2 2"/><line x1="97" y1="639.5" x2="1879" y2="639.5" stroke="#b8c5cb" stroke-width="1" stroke-dasharray="2 2"/><line x1="97" y1="619.5" x2="1879" y2="619.5" stroke="#b8c5cb" stroke-width="1" stroke-dasharray="2 2"/><line x1="97" y1="599.5" x2="1879" y2="599.5" stroke="#b8c5cb" stroke-width="1" stroke-dasharray="2 2"/><line x1="117.5" y1="579" x2="117.5" y2="779" stroke="#9aabb4" stroke-width="1" stroke-dasharray="2 2"/><line x1="154.5" y1="579" x2="154.5" y2="779" stroke="#b8c5cb" stroke-width="1" stroke-dasharray="2 2"/><line x1="191.5" y1="579" x2="191.5" y2="779" stroke="#9aabb4" stroke-width="1" stroke-dasharray="2 2"/><line x1="228.5" y1="579" x2="228.5" y2="779" stroke="#b8c5cb" stroke-width="1" stroke-dasharray="2 2"/><line x1="265.5" y1="579" x2="265.5" y2="779" stroke="#9aabb4" stroke-width="1" stroke-dasharray="2 2"/><line x1="302.5" y1="579" x2="302.5" y2="779" stroke="#b8c5cb" stroke-width="1" stroke-dasharray="2 2"/><line x1="339.5" y1="579" x2="339.5" y2="779" stroke="#9aabb4" stroke-width="1" stroke-dasharray="2 2"/><line x1="376.5" y1="579" x2="376.5" y2="779" stroke="#b8c5cb" stroke-width="1" stroke-dasharray="2 2"/><line x1="413.5" y1="579" x2="413.5" y2="779" stroke="#9aabb4" stroke-width="1" stroke-dasharray="2 2"/><line x1="450.5" y1="579" x2="450.5" y2="779" stroke="#b8c5cb" stroke-width="1" stroke-dasharray="2 2"/><line x1="488.5" y1="579" x2="488.5" y2="779" stroke="#9aabb4" stroke-width="1" stroke-dasharray="2 2"/><line x1="525.5" y1="579" x2="525.5" y2="779" stroke="#b8c5cb" stroke-width="1" stroke-dasharray="2 2"/><line x1="562.5" y1="579" x2="562.5" y2="779" stroke="#9aabb4" stroke-width="1" stroke-dasharray="2 2"/><line x1="599.5" y1="579" x2="599.5" y2="779" stroke="#b8c5cb" stroke-width="1" stroke-dasharray="2 2"/><line x1="636.5" y1="579" x2="636.5" y2="779" stroke="#9aabb4" stroke-width="1" stroke-dasharray="2 2"/><line x1="673.5" y1="579" x2="673.5" y2="779" stroke="#b8c5cb" stroke-width="1" stroke-dasharray="2 2"/><line x1="710.5" y1="579" x2="710.5" y2="779" stroke="#9aabb4" stroke-width="1" stroke-dasharray="2 2"/><line x1="747.5" y1="579" x2="747.5" y2="779" stroke="#b8c5cb" stroke-width="1" stroke-dasharray="2 2"/><line x1="784.5" y1="579" x2="784.5" y2="779" stroke="#9aabb4" stroke-width="1" stroke-dasharray="2 2"/><line x1="822.5" y1="579" x2="822.5" y2="779" stroke="#b8c5cb" stroke-width="1" stroke-dasharray="2 2"/><line x1="859.5" y1="579" x2="859.5" y2="779" stroke="#9aabb4" stroke-width="1" stroke-dasharray="2 2"/><line x1="896.5" y1="579" x2="896.5" y2="779" stroke="#b8c5cb" stroke-width="1" stroke-dasharray="2 2"/><line x1="933.5" y1="579" x2="933.5" y2="779" stroke="#9aabb4" stroke-width="1" stroke-dasharray="2 2"/><line x1="970.5" y1="579" x2="970.5" y2="779" stroke="#b8c5cb" stroke-width="1" stroke-dasharray="2 2"/><line x1="1007.5" y1="579" x2="1007.5" y2="779" stroke="#9aabb4" stroke-width="1" stroke-dasharray="2 2"/><line x1="1044.5" y1="579" x2="1044.5" y2="779" stroke="#b8c5cb" stroke-width="1" stroke-dasharray="2 2"/><line x1="1081.5" y1="579" x2="1081.5" y2="779" stroke="#9aabb4" stroke-width="1" stroke-dasharray="2 2"/><line x1="1118.5" y1="579" x2="1118.5" y2="779" stroke="#b8c5cb" stroke-width="1" stroke-dasharray="2 2"/><line x1="1156.5" y1="579" x2="1156.5" y2="779" stroke="#9aabb4" stroke-width="1" stroke-dasharray="2 2"/><line x1="1193.5" y1="579" x2="1193.5" y2="779" stroke="#b8c5cb" stroke-width="1" stroke-dasharray="2 2"/><line x1="1230.5" y1="579" x2="1230.5" y2="779" stroke="#9aabb4" stroke-width="1" stroke-dasharray="2 2"/><line x1="1267.5" y1="579" x2="1267.5" y2="779" stroke="#b8c5cb" stroke-width="1" stroke-dasharray="2 2"/><line x1="1304.5" y1="579" x2="1304.5" y2="779" stroke="#9aabb4" stroke-width="1" stroke-dasharray="2 2"/><line x1="1341.5" y1="579" x2="1341.5" y2="779" stroke="#b8c5cb" stroke-width="1" stroke-dasharray="2 2"/><line x1="1378.5" y1="579" x2="1378.5" y2="779" stroke="#9aabb4" stroke-width="1" stroke-dasharray="2 2"/><line x1="1415.5" y1="579" x2="1415.5" y2="779" stroke="#b8c5cb" stroke-width="1" stroke-dasharray="2 2"/><line x1="1452.5" y1="579" x2="1452.5" y2="779" stroke="#9aabb4" stroke-width="1" stroke-dasharray="2 2"/><line x1="1490.5" y1="579" x2="1490.5" y2="779" stroke="#b8c5cb" stroke-width="1" stroke-dasharray="2 2"/><line x1="1527.5" y1="579" x2="1527.5" y2="779" stroke="#9aabb4" stroke-width="1" stroke-dasharray="2 2"/><line x1="1564.5" y1="579" x2="1564.5" y2="779" stroke="#b8c5cb" stroke-width="1" stroke-dasharray="2 2"/><line x1="1601.5" y1="579" x2="1601.5" y2="779" stroke="#9aabb4" stroke-width="1" stroke-dasharray="2 2"/><line x1="1638.5" y1="579" x2="1638.5" y2="779" stroke="#b8c5cb" stroke-width="1" stroke-dasharray="2 2"/><line x1="1675.5" y1="579" x2="1675.5" y2="779" stroke="#9aabb4" stroke-width="1" stroke-dasharray="2 2"/><line x1="1712.5" y1="579" x2="1712.5" y2="779" stroke="#b8c5cb" stroke-width="1" stroke-dasharray="2 2"/><line x1="1749.5" y1="579" x2="1749.5" y2="779" stroke="#9aabb4" stroke-width="1" stroke-dasharray="2 2"/><line x1="1786.5" y1="579" x2="1786.5" y2="779" stroke="#b8c5cb" stroke-width="1" stroke-dasharray="2 2"/><line x1="1824.5" y1="579" x2="1824.5" y2="779" stroke="#9aabb4" stroke-width="1" stroke-dasharray="2 2"/><line x1="1861.5" y1="579" x2="1861.5" y2="779" stroke="#b8c5cb" stroke-width="1" stroke-dasharray="2 2"/><line x1="1878.5" y1="579" x2="1878.5" y2="779" stroke="#9aabb4" stroke-width="1" stroke-dasharray="2 2"/></svg><svg style="left:0px;top:0px" width="1920" height="1200"><path d="M97.5 767.0 L98.5 766.0 L100.5 765.0 L101.5 764.0 L102.5 764.0 L103.5 763.0 L104.5 763.0 L106.5 763.0 L107.5 764.0 L108.5 764.0 L109.5 765.0 L111.5 765.0 L112.5 766.0 L113.5 767.0 L114.5 768.0 L116.5 768.0 L117.5 769.0 L118.5 770.0 L119.5 769.0 L121.5 768.0 L122.5 767.0 L123.5 766.0 L124.5 765.0 L126.5 764.0 L127.5 763.0 L128.5 763.0 L129.5 762.0 L130.5 762.0 L132.5 763.0 L133.5 763.0 L134.5 764.0 L135.5 764.0 L137.5 765.0 L138.5 766.0 L139.5 766.0 L140.5 767.0 L142.5 768.0 L143.5 769.0 L144.5 770.0 L145.5 768.0 L147.5 766.0 L148.5 762.0 L149.5 757.0 L150.5 753.0 L151.5 750.0 L153.5 747.0 L154.5 746.0 L155.5 745.0 L156.5 744.0 L158.5 744.0 L159.5 745.0 L160.5 746.0 L161.5 747.0 L163.5 749.0 L164.5 750.0 L165.5 752.0 L166.5 753.0 L168.5 755.0 L169.5 757.0 L170.5 758.0 L171.5 759.0 L173.5 759.0 L174.5 759.0 L175.5 759.0 L176.5 760.0 L177.5 760.0 L179.5 760.0 L180.5 760.0 L181.5 761.0 L182.5 761.0 L184.5 762.0 L185.5 763.0 L186.5 763.0 L187.5 764.0 L189.5 765.0 L190.5 766.0 L191.5 767.0 L192.5 768.0 L194.5 769.0 L195.5 770.0 L196.5 769.0 L197.5 768.0 L198.5 766.0 L200.5 765.0 L201.5 763.0 L202.5 762.0 L203.5 761.0 L205.5 760.0 L206.5 760.0 L207.5 760.0 L208.5 760.0 L210.5 761.0 L211.5 761.0 L212.5 762.0 L213.5 763.0 L215.5 763.0 L216.5 764.0 L217.5 765.0 L218.5 766.0 L220.5 768.0 L221.5 768.0 L222.5 767.0 L223.5 766.0 L224.5 765.0 L226.5 764.0 L227.5 764.0 L228.5 763.0 L229.5 762.0 L231.5 762.0 L232.5 762.0 L233.5 763.0 L234.5 763.0 L236.5 763.0 L237.5 764.0 L238.5 765.0 L239.5 765.0 L241.5 766.0 L242.5 767.0 L243.5 768.0 L244.5 769.0 L246.5 770.0 L247.5 770.0 L248.5 769.0 L249.5 767.0 L250.5 766.0 L252.5 765.0 L253.5 763.0 L254.5 762.0 L255.5 762.0 L257.5 761.0 L258.5 761.0 L259.5 761.0 L260.5 762.0 L262.5 762.0 L263.5 763.0 L264.5 763.0 L265.5 764.0 L267.5 765.0 L268.5 766.0 L269.5 767.0 L270.5 768.0 L271.5 769.0 L273.5 769.0 L274.5 766.0 L275.5 763.0 L276.5 759.0 L278.5 755.0 L279.5 751.0 L280.5 749.0 L281.5 747.0 L283.5 745.0 L284.5 744.0 L285.5 744.0 L286.5 745.0 L288.5 746.0 L289.5 747.0 L290.5 748.0 L291.5 750.0 L293.5 751.0 L294.5 753.0 L295.5 754.0 L296.5 756.0 L297.5 758.0 L299.5 758.0 L300.5 758.0 L301.5 759.0 L302.5 759.0 L304.5 759.0 L305.5 759.0 L306.5 760.0 L307.5 760.0 L309.5 761.0 L310.5 762.0 L311.5 762.0 L312.5 763.0 L314.5 764.0 L315.5 765.0 L316.5 766.0 L317.5 767.0 L319.5 768.0 L320.5 768.0 L321.5 769.0 L322.5 770.0 L323.5 771.0 L325.5 771.0 L326.5 770.0 L327.5 768.0 L328.5 767.0 L330.5 766.0 L331.5 765.0 L332.5 764.0 L333.5 763.0 L335.5 763.0 L336.5 763.0 L337.5 763.0 L338.5 763.0 L340.5 764.0 L341.5 764.0 L342.5 765.0 L343.5 766.0 L344.5 767.0 L346.5 768.0 L347.5 768.0 L348.5 769.0 L349.5 770.0 L351.5 771.0 L352.5 769.0 L353.5 767.0 L354.5 766.0 L356.5 764.0 L357.5 763.0 L358.5 762.0 L359.5 761.0 L361.5 761.0 L362.5 760.0 L363.5 761.0 L364.5 761.0 L366.5 761.0 L367.5 762.0 L368.5 763.0 L369.5 763.0 L370.5 764.0 L372.5 765.0 L373.5 766.0 L374.5 768.0 L375.5 769.0 L377.5 769.0 L378.5 768.0 L379.5 767.0 L380.5 766.0 L382.5 765.0 L383.5 764.0 L384.5 763.0 L385.5 763.0 L387.5 763.0 L388.5 763.0 L389.5 763.0 L390.5 763.0 L392.5 764.0 L393.5 764.0 L394.5 765.0 L395.5 766.0 L396.5 767.0 L398.5 768.0 L399.5 769.0 L400.5 769.0 L401.5 770.0 L403.5 771.0 L404.5 767.0 L405.5 763.0 L406.5 759.0 L408.5 755.0 L409.5 752.0 L410.5 750.0 L411.5 748.0 L413.5 747.0 L414.5 746.0 L415.5 746.0 L416.5 747.0 L417.5 748.0 L419.5 749.0 L420.5 750.0 L421.5 752.0 L422.5 753.0 L424.5 755.0 L425.5 756.0 L426.5 758.0 L427.5 759.0 L429.5 761.0 L430.5 761.0 L431.5 761.0 L432.5 761.0 L434.5 761.0 L435.5 761.0 L436.5 761.0 L437.5 761.0 L439.5 762.0 L440.5 762.0 L441.5 763.0 L442.5 763.0 L443.5 764.0 L445.5 765.0 L446.5 766.0 L447.5 767.0 L448.5 767.0 L450.5 768.0 L451.5 769.0 L452.5 770.0 L453.5 771.0 L455.5 771.0 L456.5 770.0 L457.5 768.0 L458.5 767.0 L460.5 766.0 L461.5 764.0 L462.5 764.0 L463.5 763.0 L464.5 763.0 L466.5 762.0 L467.5 763.0 L468.5 763.0 L469.5 763.0 L471.5 764.0 L472.5 765.0 L473.5 765.0 L474.5 766.0 L476.5 767.0 L477.5 768.0 L478.5 768.0 L479.5 769.0 L481.5 769.0 L482.5 770.0 L483.5 770.0 L484.5 771.0 L486.5 771.0 L487.5 771.0 L488.5 772.0 L489.5 772.0 L490.5 773.0 L492.5 773.0 L493.5 773.0 L494.5 768.0 L495.5 761.0 L497.5 753.0 L498.5 745.0 L499.5 739.0 L500.5 737.0 L502.5 737.0 L503.5 737.0 L504.5 737.0 L505.5 737.0 L507.5 738.0 L508.5 739.0 L509.5 741.0 L510.5 743.0 L512.5 745.0 L513.5 748.0 L514.5 750.0 L515.5 752.0 L516.5 755.0 L518.5 756.0 L519.5 758.0 L520.5 756.0 L521.5 751.0 L523.5 746.0 L524.5 740.0 L525.5 737.0 L526.5 736.0 L528.5 736.0 L529.5 737.0 L530.5 738.0 L531.5 739.0 L533.5 740.0 L534.5 741.0 L535.5 743.0 L536.5 745.0 L537.5 747.0 L539.5 750.0 L540.5 752.0 L541.5 754.0 L542.5 756.0 L544.5 758.0 L545.5 757.0 L546.5 754.0 L547.5 750.0 L549.5 746.0 L550.5 743.0 L551.5 742.0 L552.5 743.0 L554.5 743.0 L555.5 744.0 L556.5 745.0 L557.5 746.0 L559.5 747.0 L560.5 749.0 L561.5 751.0 L562.5 752.0 L563.5 755.0 L565.5 756.0 L566.5 758.0 L567.5 760.0 L568.5 761.0 L570.5 763.0 L571.5 762.0 L572.5 757.0 L573.5 752.0 L575.5 747.0 L576.5 743.0 L577.5 742.0 L578.5 741.0 L580.5 742.0 L581.5 743.0 L582.5 743.0 L583.5 744.0 L585.5 745.0 L586.5 747.0 L587.5 748.0 L588.5 750.0 L589.5 753.0 L591.5 755.0 L592.5 757.0 L593.5 758.0 L594.5 760.0 L596.5 761.0 L597.5 761.0 L598.5 757.0 L599.5 752.0 L601.5 748.0 L602.5 744.0 L603.5 743.0 L604.5 743.0 L606.5 744.0 L607.5 744.0 L608.5 745.0 L609.5 746.0 L610.5 747.0 L612.5 748.0 L613.5 750.0 L614.5 752.0 L615.5 754.0 L617.5 756.0 L618.5 758.0 L619.5 760.0 L620.5 761.0 L622.5 763.0 L623.5 763.0 L624.5 760.0 L625.5 753.0 L627.5 745.0 L628.5 737.0 L629.5 732.0 L630.5 730.0 L632.5 730.0 L633.5 731.0 L634.5 732.0 L635.5 733.0 L636.5 734.0 L638.5 736.0 L639.5 738.0 L640.5 740.0 L641.5 743.0 L643.5 746.0 L644.5 749.0 L645.5 751.0 L646.5 753.0 L648.5 755.0 L649.5 754.0 L650.5 750.0 L651.5 744.0 L653.5 739.0 L654.5 735.0 L655.5 733.0 L656.5 733.0 L657.5 734.0 L659.5 735.0 L660.5 736.0 L661.5 737.0 L662.5 739.0 L664.5 741.0 L665.5 743.0 L666.5 745.0 L667.5 748.0 L669.5 750.0 L670.5 752.0 L671.5 755.0 L672.5 756.0 L674.5 758.0 L675.5 758.0 L676.5 754.0 L677.5 750.0 L679.5 745.0 L680.5 742.0 L681.5 741.0 L682.5 741.0 L683.5 741.0 L685.5 742.0 L686.5 743.0 L687.5 744.0 L688.5 745.0 L690.5 747.0 L691.5 749.0 L692.5 751.0 L693.5 753.0 L695.5 755.0 L696.5 757.0 L697.5 759.0 L698.5 760.0 L700.5 760.0 L701.5 757.0 L702.5 752.0 L703.5 747.0 L705.5 743.0 L706.5 741.0 L707.5 741.0 L708.5 742.0 L709.5 742.0 L711.5 743.0 L712.5 744.0 L713.5 745.0 L714.5 747.0 L716.5 748.0 L717.5 750.0 L718.5 752.0 L719.5 754.0 L721.5 756.0 L722.5 758.0 L723.5 760.0 L724.5 761.0 L726.5 762.0 L727.5 758.0 L728.5 754.0 L729.5 749.0 L730.5 745.0 L732.5 744.0 L733.5 744.0 L734.5 744.0 L735.5 745.0 L737.5 745.0 L738.5 746.0 L739.5 747.0 L740.5 749.0 L742.5 750.0 L743.5 752.0 L744.5 754.0 L745.5 756.0 L747.5 758.0 L748.5 760.0 L749.5 761.0 L750.5 763.0 L752.5 764.0 L753.5 762.0 L754.5 755.0 L755.5 747.0 L756.5 738.0 L758.5 731.0 L759.5 729.0 L760.5 729.0 L761.5 729.0 L763.5 730.0 L764.5 731.0 L765.5 732.0 L766.5 734.0 L768.5 736.0 L769.5 738.0 L770.5 741.0 L771.5 744.0 L773.5 747.0 L774.5 750.0 L775.5 752.0 L776.5 753.0 L778.5 750.0 L779.5 746.0 L780.5 741.0 L781.5 736.0 L782.5 734.0 L784.5 734.0 L785.5 735.0 L786.5 736.0 L787.5 737.0 L789.5 738.0 L790.5 739.0 L791.5 741.0 L792.5 743.0 L794.5 745.0 L795.5 747.0 L796.5 750.0 L797.5 752.0 L799.5 754.0 L800.5 756.0 L801.5 758.0 L802.5 759.0 L803.5 757.0 L805.5 752.0 L806.5 747.0 L807.5 743.0 L808.5 740.0 L810.5 740.0 L811.5 740.0 L812.5 741.0 L813.5 742.0 L815.5 743.0 L816.5 744.0 L817.5 745.0 L818.5 747.0 L820.5 749.0 L821.5 751.0 L822.5 753.0 L823.5 755.0 L825.5 757.0 L826.5 759.0 L827.5 761.0 L828.5 761.0 L829.5 759.0 L831.5 755.0 L832.5 751.0 L833.5 747.0 L834.5 745.0 L836.5 745.0 L837.5 746.0 L838.5 746.0 L839.5 747.0 L841.5 748.0 L842.5 749.0 L843.5 751.0 L844.5 753.0 L846.5 754.0 L847.5 756.0 L848.5 758.0 L849.5 760.0 L850.5 761.0 L852.5 763.0 L853.5 764.0 L854.5 762.0 L855.5 758.0 L857.5 754.0 L858.5 750.0 L859.5 747.0 L860.5 746.0 L862.5 746.0 L863.5 747.0 L864.5 747.0 L865.5 748.0 L867.5 749.0 L868.5 750.0 L869.5 752.0 L870.5 753.0 L872.5 755.0 L873.5 757.0 L874.5 759.0 L875.5 760.0 L876.5 762.0 L878.5 763.0 L879.5 764.0 L880.5 765.0 L881.5 760.0 L883.5 752.0 L884.5 744.0 L885.5 736.0 L886.5 731.0 L888.5 730.0 L889.5 730.0 L890.5 730.0 L891.5 731.0 L893.5 732.0 L894.5 733.0 L895.5 734.0 L896.5 736.0 L898.5 739.0 L899.5 741.0 L900.5 744.0 L901.5 747.0 L902.5 750.0 L904.5 752.0 L905.5 751.0 L906.5 748.0 L907.5 743.0 L909.5 739.0 L910.5 735.0 L911.5 735.0 L912.5 735.0 L914.5 736.0 L915.5 737.0 L916.5 739.0 L917.5 740.0 L919.5 741.0 L920.5 743.0 L921.5 745.0 L922.5 747.0 L923.5 750.0 L925.5 752.0 L926.5 754.0 L927.5 756.0 L928.5 758.0 L930.5 760.0 L931.5 761.0 L932.5 760.0 L933.5 756.0 L935.5 752.0 L936.5 748.0 L937.5 745.0 L938.5 744.0 L940.5 745.0 L941.5 745.0 L942.5 746.0 L943.5 747.0 L945.5 748.0 L946.5 749.0 L947.5 750.0 L948.5 752.0 L949.5 754.0 L951.5 756.0 L952.5 758.0 L953.5 759.0 L954.5 761.0 L956.5 762.0 L957.5 763.0 L958.5 761.0 L959.5 757.0 L961.5 751.0 L962.5 746.0 L963.5 742.0 L964.5 741.0 L966.5 741.0 L967.5 742.0 L968.5 742.0 L969.5 743.0 L971.5 744.0 L972.5 745.0 L973.5 747.0 L974.5 749.0 L975.5 750.0 L977.5 753.0 L978.5 755.0 L979.5 757.0 L980.5 759.0 L982.5 760.0 L983.5 761.0 L984.5 760.0 L985.5 756.0 L987.5 751.0 L988.5 747.0 L989.5 744.0 L990.5 743.0 L992.5 743.0 L993.5 744.0 L994.5 744.0 L995.5 745.0 L996.5 746.0 L998.5 747.0 L999.5 749.0 L1000.5 750.0 L1001.5 752.0 L1003.5 754.0 L1004.5 756.0 L1005.5 758.0 L1006.5 760.0 L1008.5 761.0 L1009.5 762.0 L1010.5 759.0 L1011.5 752.0 L1013.5 744.0 L1014.5 736.0 L1015.5 730.0 L1016.5 729.0 L1018.5 728.0 L1019.5 729.0 L1020.5 729.0 L1021.5 730.0 L1022.5 731.0 L1024.5 732.0 L1025.5 735.0 L1026.5 737.0 L1027.5 740.0 L1029.5 743.0 L1030.5 746.0 L1031.5 748.0 L1032.5 751.0 L1034.5 753.0 L1035.5 752.0 L1036.5 749.0 L1037.5 744.0 L1039.5 739.0 L1040.5 735.0 L1041.5 735.0 L1042.5 735.0 L1043.5 736.0 L1045.5 737.0 L1046.5 738.0 L1047.5 739.0 L1048.5 740.0 L1050.5 742.0 L1051.5 744.0 L1052.5 747.0 L1053.5 749.0 L1055.5 752.0 L1056.5 754.0 L1057.5 756.0 L1058.5 758.0 L1060.5 759.0 L1061.5 759.0 L1062.5 756.0 L1063.5 752.0 L1065.5 748.0 L1066.5 744.0 L1067.5 743.0 L1068.5 744.0 L1069.5 745.0 L1071.5 745.0 L1072.5 746.0 L1073.5 747.0 L1074.5 749.0 L1076.5 750.0 L1077.5 752.0 L1078.5 754.0 L1079.5 756.0 L1081.5 758.0 L1082.5 760.0 L1083.5 761.0 L1084.5 763.0 L1086.5 763.0 L1087.5 759.0 L1088.5 753.0 L1089.5 748.0 L1091.5 743.0 L1092.5 741.0 L1093.5 741.0 L1094.5 741.0 L1095.5 742.0 L1097.5 742.0 L1098.5 743.0 L1099.5 744.0 L1100.5 746.0 L1102.5 747.0 L1103.5 749.0 L1104.5 752.0 L1105.5 754.0 L1107.5 756.0 L1108.5 758.0 L1109.5 759.0 L1110.5 761.0 L1112.5 761.0 L1113.5 758.0 L1114.5 754.0 L1115.5 749.0 L1116.5 745.0 L1118.5 743.0 L1119.5 743.0 L1120.5 744.0 L1121.5 744.0 L1123.5 745.0 L1124.5 746.0 L1125.5 747.0 L1126.5 748.0 L1128.5 750.0 L1129.5 752.0 L1130.5 754.0 L1131.5 756.0 L1133.5 758.0 L1134.5 759.0 L1135.5 761.0 L1136.5 762.0 L1138.5 762.0 L1139.5 756.0 L1140.5 748.0 L1141.5 740.0 L1142.5 732.0 L1144.5 729.0 L1145.5 729.0 L1146.5 729.0 L1147.5 729.0 L1149.5 730.0 L1150.5 731.0 L1151.5 732.0 L1152.5 734.0 L1154.5 736.0 L1155.5 739.0 L1156.5 742.0 L1157.5 745.0 L1159.5 747.0 L1160.5 750.0 L1161.5 752.0 L1162.5 753.0 L1164.5 751.0 L1165.5 746.0 L1166.5 741.0 L1167.5 736.0 L1168.5 734.0 L1170.5 734.0 L1171.5 734.0 L1172.5 735.0 L1173.5 736.0 L1175.5 738.0 L1176.5 739.0 L1177.5 740.0 L1178.5 742.0 L1180.5 745.0 L1181.5 747.0 L1182.5 750.0 L1183.5 752.0 L1185.5 754.0 L1186.5 756.0 L1187.5 758.0 L1188.5 760.0 L1189.5 761.0 L1191.5 758.0 L1192.5 754.0 L1193.5 750.0 L1194.5 746.0 L1196.5 745.0 L1197.5 745.0 L1198.5 746.0 L1199.5 746.0 L1201.5 747.0 L1202.5 748.0 L1203.5 749.0 L1204.5 750.0 L1206.5 752.0 L1207.5 753.0 L1208.5 755.0 L1209.5 757.0 L1211.5 759.0 L1212.5 761.0 L1213.5 762.0 L1214.5 763.0 L1215.5 760.0 L1217.5 755.0 L1218.5 750.0 L1219.5 746.0 L1220.5 743.0 L1222.5 743.0 L1223.5 743.0 L1224.5 744.0 L1225.5 744.0 L1227.5 745.0 L1228.5 746.0 L1229.5 747.0 L1230.5 749.0 L1232.5 751.0 L1233.5 753.0 L1234.5 755.0 L1235.5 757.0 L1236.5 759.0 L1238.5 760.0 L1239.5 762.0 L1240.5 763.0 L1241.5 760.0 L1243.5 756.0 L1244.5 752.0 L1245.5 748.0 L1246.5 745.0 L1248.5 745.0 L1249.5 745.0 L1250.5 746.0 L1251.5 747.0 L1253.5 747.0 L1254.5 748.0 L1255.5 749.0 L1256.5 751.0 L1258.5 753.0 L1259.5 754.0 L1260.5 756.0 L1261.5 758.0 L1262.5 760.0 L1264.5 761.0 L1265.5 763.0 L1266.5 764.0 L1267.5 764.0 L1269.5 758.0 L1270.5 750.0 L1271.5 742.0 L1272.5 735.0 L1274.5 731.0 L1275.5 731.0 L1276.5 731.0 L1277.5 731.0 L1279.5 732.0 L1280.5 733.0 L1281.5 735.0 L1282.5 737.0 L1284.5 739.0 L1285.5 742.0 L1286.5 745.0 L1287.5 748.0 L1288.5 750.0 L1290.5 752.0 L1291.5 754.0 L1292.5 756.0 L1293.5 753.0 L1295.5 748.0 L1296.5 743.0 L1297.5 738.0 L1298.5 735.0 L1300.5 735.0 L1301.5 735.0 L1302.5 736.0 L1303.5 737.0 L1305.5 738.0 L1306.5 739.0 L1307.5 741.0 L1308.5 742.0 L1309.5 745.0 L1311.5 747.0 L1312.5 750.0 L1313.5 752.0 L1314.5 754.0 L1316.5 756.0 L1317.5 758.0 L1318.5 756.0 L1319.5 753.0 L1321.5 749.0 L1322.5 745.0 L1323.5 742.0 L1324.5 742.0 L1326.5 742.0 L1327.5 743.0 L1328.5 744.0 L1329.5 745.0 L1331.5 746.0 L1332.5 747.0 L1333.5 749.0 L1334.5 750.0 L1335.5 752.0 L1337.5 754.0 L1338.5 756.0 L1339.5 758.0 L1340.5 760.0 L1342.5 761.0 L1343.5 763.0 L1344.5 764.0 L1345.5 761.0 L1347.5 756.0 L1348.5 751.0 L1349.5 746.0 L1350.5 743.0 L1352.5 742.0 L1353.5 742.0 L1354.5 743.0 L1355.5 743.0 L1357.5 744.0 L1358.5 745.0 L1359.5 746.0 L1360.5 748.0 L1361.5 749.0 L1363.5 751.0 L1364.5 754.0 L1365.5 756.0 L1366.5 758.0 L1368.5 759.0 L1369.5 761.0 L1370.5 762.0 L1371.5 760.0 L1373.5 755.0 L1374.5 751.0 L1375.5 746.0 L1376.5 743.0 L1378.5 743.0 L1379.5 743.0 L1380.5 744.0 L1381.5 744.0 L1382.5 745.0 L1384.5 746.0 L1385.5 748.0 L1386.5 749.0 L1387.5 751.0 L1389.5 753.0 L1390.5 755.0 L1391.5 757.0 L1392.5 759.0 L1394.5 760.0 L1395.5 762.0 L1396.5 762.0 L1397.5 758.0 L1399.5 750.0 L1400.5 742.0 L1401.5 734.0 L1402.5 729.0 L1404.5 728.0 L1405.5 727.0 L1406.5 728.0 L1407.5 728.0 L1408.5 729.0 L1410.5 731.0 L1411.5 732.0 L1412.5 734.0 L1413.5 737.0 L1415.5 740.0 L1416.5 743.0 L1417.5 746.0 L1418.5 748.0 L1420.5 751.0 L1421.5 753.0 L1422.5 754.0 L1423.5 752.0 L1425.5 748.0 L1426.5 742.0 L1427.5 737.0 L1428.5 734.0 L1430.5 734.0 L1431.5 735.0 L1432.5 736.0 L1433.5 737.0 L1434.5 738.0 L1436.5 740.0 L1437.5 742.0 L1438.5 744.0 L1439.5 746.0 L1441.5 749.0 L1442.5 751.0 L1443.5 753.0 L1444.5 755.0 L1446.5 757.0 L1447.5 759.0 L1448.5 757.0 L1449.5 753.0 L1451.5 748.0 L1452.5 744.0 L1453.5 740.0 L1454.5 740.0 L1455.5 740.0 L1457.5 741.0 L1458.5 741.0 L1459.5 742.0 L1460.5 743.0 L1462.5 744.0 L1463.5 746.0 L1464.5 748.0 L1465.5 750.0 L1467.5 752.0 L1468.5 754.0 L1469.5 756.0 L1470.5 758.0 L1472.5 760.0 L1473.5 761.0 L1474.5 760.0 L1475.5 755.0 L1477.5 750.0 L1478.5 745.0 L1479.5 741.0 L1480.5 740.0 L1481.5 741.0 L1483.5 741.0 L1484.5 742.0 L1485.5 743.0 L1486.5 744.0 L1488.5 746.0 L1489.5 747.0 L1490.5 749.0 L1491.5 752.0 L1493.5 754.0 L1494.5 756.0 L1495.5 758.0 L1496.5 759.0 L1498.5 761.0 L1499.5 762.0 L1500.5 761.0 L1501.5 757.0 L1502.5 753.0 L1504.5 748.0 L1505.5 745.0 L1506.5 744.0 L1507.5 744.0 L1509.5 745.0 L1510.5 745.0 L1511.5 746.0 L1512.5 747.0 L1514.5 748.0 L1515.5 750.0 L1516.5 751.0 L1517.5 753.0 L1519.5 755.0 L1520.5 757.0 L1521.5 759.0 L1522.5 760.0 L1524.5 762.0 L1525.5 763.0 L1526.5 764.0 L1527.5 760.0 L1528.5 752.0 L1530.5 743.0 L1531.5 734.0 L1532.5 729.0 L1533.5 727.0 L1535.5 726.0 L1536.5 727.0 L1537.5 727.0 L1538.5 728.0 L1540.5 729.0 L1541.5 731.0 L1542.5 733.0 L1543.5 736.0 L1545.5 738.0 L1546.5 742.0 L1547.5 745.0 L1548.5 747.0 L1550.5 749.0 L1551.5 745.0 L1552.5 740.0 L1553.5 735.0 L1554.5 731.0 L1556.5 729.0 L1557.5 730.0 L1558.5 731.0 L1559.5 732.0 L1561.5 733.0M1567.5 743.0 L1568.5 746.0 L1569.5 748.0 L1571.5 751.0 L1572.5 753.0 L1573.5 755.0 L1574.5 757.0 L1575.5 758.0 L1577.5 755.0 L1578.5 751.0 L1579.5 747.0 L1580.5 743.0 L1582.5 741.0 L1583.5 742.0 L1584.5 742.0 L1585.5 743.0 L1587.5 744.0 L1588.5 745.0 L1589.5 746.0 L1590.5 747.0 L1592.5 749.0 L1593.5 751.0 L1594.5 753.0 L1595.5 755.0 L1597.5 757.0 L1598.5 759.0 L1599.5 760.0 L1600.5 761.0 L1601.5 759.0 L1603.5 755.0 L1604.5 750.0 L1605.5 746.0 L1606.5 743.0 L1608.5 743.0 L1609.5 744.0 L1610.5 744.0 L1611.5 745.0 L1613.5 746.0 L1614.5 747.0 L1615.5 748.0 L1616.5 750.0 L1618.5 751.0 L1619.5 753.0 L1620.5 755.0 L1621.5 757.0 L1623.5 759.0 L1624.5 761.0 L1625.5 762.0 L1626.5 763.0 L1627.5 765.0 L1629.5 764.0 L1630.5 760.0 L1631.5 756.0 L1632.5 751.0 L1634.5 747.0 L1635.5 745.0 L1636.5 745.0 L1637.5 746.0 L1639.5 746.0 L1640.5 747.0 L1641.5 748.0 L1642.5 749.0 L1644.5 751.0 L1645.5 752.0 L1646.5 754.0 L1647.5 756.0 L1648.5 758.0 L1650.5 760.0 L1651.5 761.0 L1652.5 763.0 L1653.5 764.0 L1655.5 763.0 L1656.5 755.0 L1657.5 746.0 L1658.5 737.0 L1660.5 730.0 L1661.5 727.0 L1662.5 726.0 L1663.5 726.0 L1665.5 726.0 L1666.5 727.0 L1667.5 728.0 L1668.5 729.0 L1670.5 731.0 L1671.5 733.0 L1672.5 736.0 L1673.5 739.0 L1674.5 743.0 L1676.5 745.0 L1677.5 748.0 L1678.5 750.0 L1679.5 748.0 L1681.5 744.0 L1682.5 739.0 L1683.5 735.0 L1684.5 733.0 L1686.5 733.0 L1687.5 734.0 L1688.5 735.0 L1689.5 736.0 L1691.5 737.0 L1692.5 739.0 L1693.5 740.0 L1694.5 742.0 L1695.5 745.0 L1697.5 747.0 L1698.5 750.0 L1699.5 752.0 L1700.5 754.0 L1702.5 756.0 L1703.5 758.0 L1704.5 759.0 L1705.5 757.0 L1707.5 753.0 L1708.5 748.0 L1709.5 744.0 L1710.5 741.0 L1712.5 741.0 L1713.5 741.0 L1714.5 742.0 L1715.5 743.0 L1717.5 744.0 L1718.5 745.0 L1719.5 746.0 L1720.5 748.0 L1721.5 750.0 L1723.5 752.0 L1724.5 754.0 L1725.5 756.0 L1726.5 758.0 L1728.5 759.0 L1729.5 761.0 L1730.5 762.0 L1731.5 759.0 L1733.5 754.0 L1734.5 749.0 L1735.5 744.0 L1736.5 741.0 L1738.5 741.0 L1739.5 741.0 L1740.5 741.0 L1741.5 742.0 L1743.5 743.0 L1744.5 744.0 L1745.5 745.0 L1746.5 747.0 L1747.5 749.0 L1749.5 751.0 L1750.5 753.0 L1751.5 755.0 L1752.5 757.0 L1754.5 759.0 L1755.5 760.0 L1756.5 761.0 L1757.5 759.0 L1759.5 755.0 L1760.5 750.0 L1761.5 745.0 L1762.5 743.0 L1764.5 742.0 L1765.5 742.0 L1766.5 743.0 L1767.5 744.0 L1768.5 745.0 L1770.5 746.0 L1771.5 747.0 L1772.5 748.0 L1773.5 750.0 L1775.5 752.0 L1776.5 754.0 L1777.5 756.0 L1778.5 758.0 L1780.5 760.0 L1781.5 761.0 L1782.5 763.0 L1783.5 763.0 L1785.5 757.0 L1786.5 748.0 L1787.5 739.0 L1788.5 731.0 L1790.5 727.0 L1791.5 726.0 L1792.5 726.0 L1793.5 726.0 L1794.5 727.0 L1796.5 728.0 L1797.5 729.0 L1798.5 731.0 L1799.5 733.0 L1801.5 736.0 L1802.5 739.0 L1803.5 742.0 L1804.5 745.0 L1806.5 747.0 L1807.5 750.0 L1808.5 751.0 L1809.5 749.0 L1811.5 744.0 L1812.5 739.0 L1813.5 734.0 L1814.5 730.0 L1816.5 730.0 L1817.5 731.0 L1818.5 732.0 L1819.5 733.0 L1820.5 734.0 L1822.5 736.0 L1823.5 737.0 L1824.5 739.0 L1825.5 742.0 L1827.5 744.0 L1828.5 747.0 L1829.5 750.0 L1830.5 752.0 L1832.5 754.0 L1833.5 756.0 L1834.5 757.0 L1835.5 756.0 L1837.5 752.0 L1838.5 747.0 L1839.5 743.0 L1840.5 740.0 L1841.5 740.0 L1843.5 741.0 L1844.5 741.0 L1845.5 742.0 L1846.5 744.0 L1848.5 745.0 L1849.5 746.0 L1850.5 748.0 L1851.5 750.0 L1853.5 753.0 L1854.5 755.0 L1855.5 757.0 L1856.5 758.0 L1858.5 760.0 L1859.5 762.0 L1860.5 762.0 L1861.5 760.0 L1863.5 756.0 L1864.5 750.0 L1865.5 746.0 L1866.5 742.0 L1867.5 742.0 L1869.5 743.0 L1870.5 743.0 L1871.5 744.0 L1872.5 745.0 L1874.5 746.0 L1875.5 747.0 L1876.5 749.0 L1877.5 751.0 L1879.5 753.0" fill="none" stroke="#990000" stroke-width="1.2"/><path d="M97.5 764.0 L98.5 761.0 L100.5 759.0 L101.5 758.0 L102.5 757.0 L103.5 757.0 L104.5 757.0 L106.5 758.0 L107.5 759.0 L108.5 761.0 L109.5 762.0 L111.5 764.0 L112.5 765.0 L113.5 767.0 L114.5 769.0 L116.5 770.0 L117.5 772.0 L118.5 773.0 L119.5 771.0 L121.5 767.0 L122.5 763.0 L123.5 761.0 L124.5 759.0 L126.5 757.0 L127.5 756.0 L128.5 756.0 L129.5 756.0 L130.5 756.0 L132.5 757.0 L133.5 759.0 L134.5 760.0 L135.5 762.0 L137.5 764.0 L138.5 765.0 L139.5 767.0 L140.5 769.0 L142.5 770.0 L143.5 772.0 L144.5 773.0 L145.5 768.0 L147.5 761.0 L148.5 751.0 L149.5 742.0 L150.5 734.0 L151.5 728.0 L153.5 725.0 L154.5 723.0 L155.5 724.0 L156.5 725.0 L158.5 728.0 L159.5 731.0 L160.5 736.0 L161.5 740.0 L163.5 744.0 L164.5 747.0 L165.5 751.0 L166.5 754.0 L168.5 757.0 L169.5 760.0 L170.5 763.0 L171.5 763.0 L173.5 762.0 L174.5 761.0 L175.5 761.0 L176.5 760.0 L177.5 760.0 L179.5 760.0 L180.5 760.0 L181.5 761.0 L182.5 761.0 L184.5 762.0 L185.5 764.0 L186.5 765.0 L187.5 766.0 L189.5 768.0 L190.5 769.0 L191.5 770.0 L192.5 772.0 L194.5 773.0 L195.5 774.0 L196.5 772.0 L197.5 767.0 L198.5 763.0 L200.5 759.0 L201.5 756.0 L202.5 754.0 L203.5 752.0 L205.5 752.0 L206.5 752.0 L207.5 753.0 L208.5 754.0 L210.5 755.0 L211.5 757.0 L212.5 759.0 L213.5 761.0 L215.5 763.0 L216.5 765.0 L217.5 767.0 L218.5 769.0 L220.5 771.0 L221.5 771.0 L222.5 767.0 L223.5 764.0 L224.5 762.0 L226.5 760.0 L227.5 758.0 L228.5 757.0 L229.5 757.0 L231.5 757.0 L232.5 757.0 L233.5 758.0 L234.5 759.0 L236.5 761.0 L237.5 762.0 L238.5 764.0 L239.5 765.0 L241.5 767.0 L242.5 769.0 L243.5 770.0 L244.5 772.0 L246.5 773.0 L247.5 773.0 L248.5 768.0 L249.5 764.0 L250.5 761.0 L252.5 758.0 L253.5 756.0 L254.5 754.0 L255.5 754.0 L257.5 754.0 L258.5 754.0 L259.5 755.0 L260.5 756.0 L262.5 758.0 L263.5 759.0 L264.5 761.0 L265.5 763.0 L267.5 765.0 L268.5 767.0 L269.5 769.0 L270.5 771.0 L271.5 772.0 L273.5 772.0 L274.5 764.0 L275.5 756.0 L276.5 746.0 L278.5 738.0 L279.5 731.0 L280.5 727.0 L281.5 725.0 L283.5 724.0 L284.5 725.0 L285.5 727.0 L286.5 730.0 L288.5 734.0 L289.5 738.0 L290.5 742.0 L291.5 746.0 L293.5 749.0 L294.5 753.0 L295.5 756.0 L296.5 759.0 L297.5 762.0 L299.5 761.0 L300.5 761.0 L301.5 760.0 L302.5 760.0 L304.5 760.0 L305.5 760.0 L306.5 760.0 L307.5 761.0 L309.5 761.0 L310.5 762.0 L311.5 764.0 L312.5 765.0 L314.5 766.0 L315.5 767.0 L316.5 769.0 L317.5 770.0 L319.5 771.0 L320.5 773.0 L321.5 774.0 L322.5 775.0 L323.5 776.0 L325.5 775.0 L326.5 770.0 L327.5 766.0 L328.5 763.0 L330.5 760.0 L331.5 758.0 L332.5 757.0 L333.5 756.0 L335.5 756.0 L336.5 757.0 L337.5 758.0 L338.5 759.0 L340.5 760.0 L341.5 762.0 L342.5 763.0 L343.5 765.0 L344.5 767.0 L346.5 769.0 L347.5 770.0 L348.5 772.0 L349.5 773.0 L351.5 774.0 L352.5 768.0 L353.5 764.0 L354.5 760.0 L356.5 757.0 L357.5 755.0 L358.5 753.0 L359.5 752.0 L361.5 752.0 L362.5 753.0 L363.5 754.0 L364.5 755.0 L366.5 757.0 L367.5 758.0 L368.5 760.0 L369.5 762.0 L370.5 764.0 L372.5 766.0 L373.5 768.0 L374.5 770.0 L375.5 772.0 L377.5 773.0 L378.5 768.0 L379.5 765.0 L380.5 762.0 L382.5 760.0 L383.5 758.0 L384.5 757.0 L385.5 757.0 L387.5 757.0 L388.5 758.0 L389.5 759.0 L390.5 760.0 L392.5 761.0 L393.5 763.0 L394.5 764.0 L395.5 766.0 L396.5 768.0 L398.5 769.0 L399.5 771.0 L400.5 772.0 L401.5 774.0 L403.5 774.0 L404.5 765.0 L405.5 755.0 L406.5 745.0 L408.5 737.0 L409.5 732.0 L410.5 728.0 L411.5 727.0 L413.5 726.0 L414.5 728.0 L415.5 730.0 L416.5 733.0 L417.5 737.0 L419.5 741.0 L420.5 745.0 L421.5 749.0 L422.5 752.0 L424.5 755.0 L425.5 758.0 L426.5 761.0 L427.5 764.0 L429.5 766.0 L430.5 765.0 L431.5 763.0 L432.5 762.0 L434.5 761.0 L435.5 761.0 L436.5 761.0 L437.5 761.0 L439.5 761.0 L440.5 762.0 L441.5 763.0 L442.5 764.0 L443.5 765.0 L445.5 766.0 L446.5 768.0 L447.5 769.0 L448.5 770.0 L450.5 772.0 L451.5 773.0 L452.5 774.0 L453.5 775.0 L455.5 775.0 L456.5 770.0 L457.5 766.0 L458.5 763.0 L460.5 760.0 L461.5 758.0 L462.5 756.0 L463.5 755.0 L464.5 755.0 L466.5 756.0 L467.5 757.0 L468.5 758.0 L469.5 759.0 L471.5 761.0 L472.5 763.0 L473.5 765.0 L474.5 766.0 L476.5 768.0 L477.5 770.0 L478.5 770.0 L479.5 771.0 L481.5 771.0 L482.5 772.0 L483.5 772.0 L484.5 772.0 L486.5 773.0 L487.5 773.0 L488.5 774.0 L489.5 774.0 L490.5 774.0 L492.5 775.0 L493.5 774.0 L494.5 763.0 L495.5 745.0 L497.5 726.0 L498.5 710.0 L499.5 701.0 L500.5 702.0 L502.5 705.0 L503.5 710.0 L504.5 713.0 L505.5 718.0 L507.5 722.0 L508.5 726.0 L509.5 731.0 L510.5 737.0 L512.5 742.0 L513.5 749.0 L514.5 754.0 L515.5 758.0 L516.5 761.0 L518.5 764.0 L519.5 765.0 L520.5 758.0 L521.5 745.0 L523.5 731.0 L524.5 719.0 L525.5 713.0 L526.5 714.0 L528.5 717.0 L529.5 721.0 L530.5 724.0 L531.5 728.0 L533.5 732.0 L534.5 735.0 L535.5 740.0 L536.5 744.0 L537.5 749.0 L539.5 754.0 L540.5 758.0 L541.5 762.0 L542.5 764.0 L544.5 766.0 L545.5 763.0 L546.5 753.0 L547.5 742.0 L549.5 733.0 L550.5 726.0 L551.5 727.0 L552.5 729.0 L554.5 732.0 L555.5 735.0 L556.5 738.0 L557.5 741.0 L559.5 743.0 L560.5 747.0 L561.5 751.0 L562.5 754.0 L563.5 758.0 L565.5 762.0 L566.5 765.0 L567.5 767.0 L568.5 769.0 L570.5 770.0 L571.5 765.0 L572.5 753.0 L573.5 740.0 L575.5 728.0 L576.5 720.0 L577.5 720.0 L578.5 723.0 L580.5 726.0 L581.5 729.0 L582.5 732.0 L583.5 736.0 L585.5 738.0 L586.5 742.0 L587.5 747.0 L588.5 751.0 L589.5 755.0 L591.5 759.0 L592.5 763.0 L593.5 765.0 L594.5 767.0 L596.5 769.0 L597.5 765.0 L598.5 754.0 L599.5 742.0 L601.5 732.0 L602.5 724.0 L603.5 724.0 L604.5 726.0 L606.5 730.0 L607.5 733.0 L608.5 736.0 L609.5 739.0 L610.5 741.0 L612.5 745.0 L613.5 749.0 L614.5 753.0 L615.5 757.0 L617.5 761.0 L618.5 764.0 L619.5 766.0 L620.5 768.0 L622.5 770.0 L623.5 770.0 L624.5 761.0 L625.5 742.0 L627.5 723.0 L628.5 706.0 L629.5 697.0 L630.5 697.0 L632.5 702.0 L633.5 707.0 L634.5 711.0 L635.5 716.0 L636.5 720.0 L638.5 726.0 L639.5 732.0 L640.5 738.0 L641.5 745.0 L643.5 750.0 L644.5 755.0 L645.5 759.0 L646.5 762.0 L648.5 765.0 L649.5 760.0 L650.5 747.0 L651.5 733.0 L653.5 720.0 L654.5 711.0 L655.5 711.0 L656.5 714.0 L657.5 718.0 L659.5 721.0 L660.5 725.0 L661.5 729.0 L662.5 732.0 L664.5 737.0 L665.5 742.0 L666.5 746.0 L667.5 752.0 L669.5 756.0 L670.5 760.0 L671.5 763.0 L672.5 766.0 L674.5 768.0 L675.5 764.0 L676.5 753.0 L677.5 741.0 L679.5 730.0 L680.5 723.0 L681.5 723.0 L682.5 725.0 L683.5 728.0 L685.5 731.0 L686.5 734.0 L687.5 737.0 L688.5 740.0 L690.5 744.0 L691.5 748.0 L692.5 752.0 L693.5 756.0 L695.5 760.0 L696.5 763.0 L697.5 766.0 L698.5 768.0 L700.5 767.0 L701.5 756.0 L702.5 743.0 L703.5 732.0 L705.5 722.0 L706.5 721.0 L707.5 724.0 L708.5 727.0 L709.5 730.0 L711.5 733.0 L712.5 736.0 L713.5 739.0 L714.5 743.0 L716.5 746.0 L717.5 751.0 L718.5 755.0 L719.5 759.0 L721.5 762.0 L722.5 765.0 L723.5 767.0 L724.5 769.0 L726.5 768.0 L727.5 758.0 L728.5 746.0 L729.5 735.0 L730.5 726.0 L732.5 725.0 L733.5 727.0 L734.5 730.0 L735.5 733.0 L737.5 736.0 L738.5 739.0 L739.5 741.0 L740.5 745.0 L742.5 748.0 L743.5 752.0 L744.5 756.0 L745.5 760.0 L747.5 763.0 L748.5 766.0 L749.5 768.0 L750.5 770.0 L752.5 771.0 L753.5 765.0 L754.5 747.0 L755.5 726.0 L756.5 708.0 L758.5 695.0 L759.5 693.0 L760.5 698.0 L761.5 703.0 L763.5 707.0 L764.5 712.0 L765.5 717.0 L766.5 723.0 L768.5 728.0 L769.5 735.0 L770.5 741.0 L771.5 748.0 L773.5 753.0 L774.5 757.0 L775.5 761.0 L776.5 761.0 L778.5 752.0 L779.5 740.0 L780.5 727.0 L781.5 717.0 L782.5 713.0 L784.5 716.0 L785.5 719.0 L786.5 723.0 L787.5 726.0 L789.5 730.0 L790.5 734.0 L791.5 737.0 L792.5 742.0 L794.5 747.0 L795.5 751.0 L796.5 756.0 L797.5 760.0 L799.5 763.0 L800.5 765.0 L801.5 768.0 L802.5 768.0 L803.5 759.0 L805.5 746.0 L806.5 734.0 L807.5 724.0 L808.5 720.0 L810.5 722.0 L811.5 725.0 L812.5 728.0 L813.5 731.0 L815.5 734.0 L816.5 737.0 L817.5 741.0 L818.5 745.0 L820.5 749.0 L821.5 753.0 L822.5 758.0 L823.5 761.0 L825.5 764.0 L826.5 767.0 L827.5 769.0 L828.5 769.0 L829.5 761.0 L831.5 751.0 L832.5 740.0 L833.5 731.0 L834.5 728.0 L836.5 730.0 L837.5 733.0 L838.5 736.0 L839.5 739.0 L841.5 742.0 L842.5 745.0 L843.5 748.0 L844.5 752.0 L846.5 756.0 L847.5 760.0 L848.5 763.0 L849.5 766.0 L850.5 768.0 L852.5 770.0 L853.5 770.0 L854.5 764.0 L855.5 754.0 L857.5 743.0 L858.5 733.0 L859.5 729.0 L860.5 730.0 L862.5 732.0 L863.5 735.0 L864.5 737.0 L865.5 740.0 L867.5 743.0 L868.5 745.0 L869.5 749.0 L870.5 753.0 L872.5 756.0 L873.5 760.0 L874.5 763.0 L875.5 766.0 L876.5 768.0 L878.5 770.0 L879.5 771.0 L880.5 770.0 L881.5 756.0 L883.5 737.0 L884.5 718.0 L885.5 702.0 L886.5 695.0 L888.5 697.0 L889.5 701.0 L890.5 705.0 L891.5 709.0 L893.5 714.0 L894.5 718.0 L895.5 723.0 L896.5 729.0 L898.5 735.0 L899.5 741.0 L900.5 747.0 L901.5 753.0 L902.5 757.0 L904.5 760.0 L905.5 756.0 L906.5 745.0 L907.5 733.0 L909.5 723.0 L910.5 716.0 L911.5 717.0 L912.5 720.0 L914.5 724.0 L915.5 727.0 L916.5 731.0 L917.5 734.0 L919.5 737.0 L920.5 742.0 L921.5 746.0 L922.5 750.0 L923.5 755.0 L925.5 759.0 L926.5 762.0 L927.5 765.0 L928.5 767.0 L930.5 769.0 L931.5 770.0 L932.5 764.0 L933.5 754.0 L935.5 742.0 L936.5 733.0 L937.5 728.0 L938.5 728.0 L940.5 730.0 L941.5 734.0 L942.5 736.0 L943.5 739.0 L945.5 742.0 L946.5 744.0 L947.5 748.0 L948.5 752.0 L949.5 755.0 L951.5 759.0 L952.5 763.0 L953.5 765.0 L954.5 768.0 L956.5 769.0 L957.5 770.0 L958.5 763.0 L959.5 751.0 L961.5 737.0 L962.5 726.0 L963.5 719.0 L964.5 720.0 L966.5 722.0 L967.5 726.0 L968.5 729.0 L969.5 732.0 L971.5 735.0 L972.5 738.0 L973.5 742.0 L974.5 747.0 L975.5 751.0 L977.5 756.0 L978.5 760.0 L979.5 763.0 L980.5 765.0 L982.5 768.0 L983.5 769.0 L984.5 763.0 L985.5 752.0 L987.5 740.0 L988.5 730.0 L989.5 724.0 L990.5 725.0 L992.5 727.0 L993.5 730.0 L994.5 733.0 L995.5 736.0 L996.5 739.0 L998.5 742.0 L999.5 746.0 L1000.5 750.0 L1001.5 754.0 L1003.5 758.0 L1004.5 761.0 L1005.5 764.0 L1006.5 767.0 L1008.5 769.0 L1009.5 769.0 L1010.5 759.0 L1011.5 741.0 L1013.5 721.0 L1014.5 704.0 L1015.5 694.0 L1016.5 695.0 L1018.5 698.0 L1019.5 703.0 L1020.5 708.0 L1021.5 712.0 L1022.5 717.0 L1024.5 721.0 L1025.5 727.0 L1026.5 733.0 L1027.5 739.0 L1029.5 746.0 L1030.5 751.0 L1031.5 756.0 L1032.5 760.0 L1034.5 762.0 L1035.5 759.0 L1036.5 748.0 L1037.5 735.0 L1039.5 723.0 L1040.5 715.0 L1041.5 715.0 L1042.5 718.0 L1043.5 722.0 L1045.5 726.0 L1046.5 729.0 L1047.5 733.0 L1048.5 736.0 L1050.5 740.0 L1051.5 745.0 L1052.5 749.0 L1053.5 754.0 L1055.5 758.0 L1056.5 762.0 L1057.5 764.0 L1058.5 767.0 L1060.5 769.0 L1061.5 765.0 L1062.5 756.0 L1063.5 744.0 L1065.5 734.0 L1066.5 727.0 L1067.5 727.0 L1068.5 730.0 L1069.5 734.0 L1071.5 736.0 L1072.5 740.0 L1073.5 742.0 L1074.5 746.0 L1076.5 749.0 L1077.5 753.0 L1078.5 757.0 L1079.5 761.0 L1081.5 764.0 L1082.5 766.0 L1083.5 768.0 L1084.5 770.0 L1086.5 768.0 L1087.5 756.0 L1088.5 743.0 L1089.5 730.0 L1091.5 720.0 L1092.5 718.0 L1093.5 721.0 L1094.5 724.0 L1095.5 727.0 L1097.5 730.0 L1098.5 734.0 L1099.5 737.0 L1100.5 741.0 L1102.5 745.0 L1103.5 749.0 L1104.5 754.0 L1105.5 758.0 L1107.5 761.0 L1108.5 764.0 L1109.5 767.0 L1110.5 769.0 L1112.5 768.0 L1113.5 757.0 L1114.5 746.0 L1115.5 735.0 L1116.5 726.0 L1118.5 725.0 L1119.5 727.0 L1120.5 730.0 L1121.5 733.0 L1123.5 735.0 L1124.5 739.0 L1125.5 741.0 L1126.5 745.0 L1128.5 748.0 L1129.5 752.0 L1130.5 756.0 L1131.5 760.0 L1133.5 763.0 L1134.5 766.0 L1135.5 768.0 L1136.5 770.0 L1138.5 767.0 L1139.5 750.0 L1140.5 731.0 L1141.5 712.0 L1142.5 697.0 L1144.5 694.0 L1145.5 697.0 L1146.5 702.0 L1147.5 706.0 L1149.5 710.0 L1150.5 715.0 L1151.5 719.0 L1152.5 725.0 L1154.5 730.0 L1155.5 737.0 L1156.5 743.0 L1157.5 749.0 L1159.5 754.0 L1160.5 758.0 L1161.5 761.0 L1162.5 762.0 L1164.5 753.0 L1165.5 740.0 L1166.5 727.0 L1167.5 716.0 L1168.5 712.0 L1170.5 715.0 L1171.5 718.0 L1172.5 722.0 L1173.5 726.0 L1175.5 730.0 L1176.5 733.0 L1177.5 737.0 L1178.5 741.0 L1180.5 746.0 L1181.5 751.0 L1182.5 755.0 L1183.5 759.0 L1185.5 763.0 L1186.5 765.0 L1187.5 767.0 L1188.5 769.0 L1189.5 769.0 L1191.5 760.0 L1192.5 749.0 L1193.5 739.0 L1194.5 731.0 L1196.5 729.0 L1197.5 731.0 L1198.5 734.0 L1199.5 737.0 L1201.5 739.0 L1202.5 742.0 L1203.5 744.0 L1204.5 748.0 L1206.5 751.0 L1207.5 755.0 L1208.5 758.0 L1209.5 762.0 L1211.5 765.0 L1212.5 767.0 L1213.5 769.0 L1214.5 769.0 L1215.5 760.0 L1217.5 748.0 L1218.5 736.0 L1219.5 726.0 L1220.5 722.0 L1222.5 724.0 L1223.5 727.0 L1224.5 730.0 L1225.5 733.0 L1227.5 736.0 L1228.5 739.0 L1229.5 742.0 L1230.5 746.0 L1232.5 750.0 L1233.5 754.0 L1234.5 758.0 L1235.5 762.0 L1236.5 765.0 L1238.5 767.0 L1239.5 769.0 L1240.5 769.0 L1241.5 761.0 L1243.5 751.0 L1244.5 740.0 L1245.5 731.0 L1246.5 727.0 L1248.5 729.0 L1249.5 731.0 L1250.5 734.0 L1251.5 737.0 L1253.5 740.0 L1254.5 742.0 L1255.5 745.0 L1256.5 749.0 L1258.5 753.0 L1259.5 756.0 L1260.5 760.0 L1261.5 763.0 L1262.5 766.0 L1264.5 768.0 L1265.5 770.0 L1266.5 771.0 L1267.5 769.0 L1269.5 753.0 L1270.5 734.0 L1271.5 715.0 L1272.5 700.0 L1274.5 696.0 L1275.5 700.0 L1276.5 705.0 L1277.5 709.0 L1279.5 714.0 L1280.5 718.0 L1281.5 723.0 L1282.5 729.0 L1284.5 735.0 L1285.5 741.0 L1286.5 748.0 L1287.5 753.0 L1288.5 757.0 L1290.5 761.0 L1291.5 763.0 L1292.5 764.0 L1293.5 755.0 L1295.5 742.0 L1296.5 728.0 L1297.5 717.0 L1298.5 712.0 L1300.5 714.0 L1301.5 717.0 L1302.5 721.0 L1303.5 725.0 L1305.5 729.0 L1306.5 732.0 L1307.5 736.0 L1308.5 740.0 L1309.5 745.0 L1311.5 750.0 L1312.5 755.0 L1313.5 759.0 L1314.5 762.0 L1316.5 765.0 L1317.5 766.0 L1318.5 761.0 L1319.5 751.0 L1321.5 739.0 L1322.5 730.0 L1323.5 725.0 L1324.5 726.0 L1326.5 728.0 L1327.5 732.0 L1328.5 735.0 L1329.5 738.0 L1331.5 741.0 L1332.5 743.0 L1333.5 747.0 L1334.5 751.0 L1335.5 755.0 L1337.5 759.0 L1338.5 762.0 L1339.5 765.0 L1340.5 767.0 L1342.5 769.0 L1343.5 771.0 L1344.5 771.0 L1345.5 762.0 L1347.5 749.0 L1348.5 736.0 L1349.5 725.0 L1350.5 720.0 L1352.5 722.0 L1353.5 724.0 L1354.5 727.0 L1355.5 730.0 L1357.5 734.0 L1358.5 737.0 L1359.5 740.0 L1360.5 744.0 L1361.5 748.0 L1363.5 753.0 L1364.5 757.0 L1365.5 761.0 L1366.5 764.0 L1368.5 766.0 L1369.5 768.0 L1370.5 769.0 L1371.5 761.0 L1373.5 750.0 L1374.5 738.0 L1375.5 728.0 L1376.5 724.0 L1378.5 725.0 L1379.5 728.0 L1380.5 731.0 L1381.5 734.0 L1382.5 737.0 L1384.5 740.0 L1385.5 743.0 L1386.5 746.0 L1387.5 751.0 L1389.5 754.0 L1390.5 759.0 L1391.5 762.0 L1392.5 765.0 L1394.5 767.0 L1395.5 769.0 L1396.5 768.0 L1397.5 756.0 L1399.5 736.0 L1400.5 717.0 L1401.5 700.0 L1402.5 692.0 L1404.5 694.0 L1405.5 698.0 L1406.5 703.0 L1407.5 707.0 L1408.5 712.0 L1410.5 716.0 L1411.5 721.0 L1412.5 727.0 L1413.5 733.0 L1415.5 739.0 L1416.5 746.0 L1417.5 752.0 L1418.5 756.0 L1420.5 760.0 L1421.5 763.0 L1422.5 764.0 L1423.5 756.0 L1425.5 743.0 L1426.5 729.0 L1427.5 718.0 L1428.5 712.0 L1430.5 714.0 L1431.5 719.0 L1432.5 722.0 L1433.5 726.0 L1434.5 730.0 L1436.5 734.0 L1437.5 738.0 L1438.5 743.0 L1439.5 748.0 L1441.5 753.0 L1442.5 758.0 L1443.5 761.0 L1444.5 764.0 L1446.5 766.0 L1447.5 768.0 L1448.5 762.0 L1449.5 750.0 L1451.5 737.0 L1452.5 727.0 L1453.5 720.0 L1454.5 721.0 L1455.5 723.0 L1457.5 727.0 L1458.5 730.0 L1459.5 733.0 L1460.5 736.0 L1462.5 739.0 L1463.5 743.0 L1464.5 748.0 L1465.5 752.0 L1467.5 756.0 L1468.5 760.0 L1469.5 763.0 L1470.5 766.0 L1472.5 768.0 L1473.5 769.0 L1474.5 763.0 L1475.5 751.0 L1477.5 737.0 L1478.5 726.0 L1479.5 719.0 L1480.5 719.0 L1481.5 723.0 L1483.5 727.0 L1484.5 730.0 L1485.5 733.0 L1486.5 736.0 L1488.5 741.0 L1489.5 745.0 L1490.5 750.0 L1491.5 754.0 L1493.5 758.0 L1494.5 762.0 L1495.5 765.0 L1496.5 767.0 L1498.5 769.0 L1499.5 770.0 L1500.5 765.0 L1501.5 754.0 L1502.5 742.0 L1504.5 732.0 L1505.5 726.0 L1506.5 727.0 L1507.5 729.0 L1509.5 732.0 L1510.5 735.0 L1511.5 737.0 L1512.5 740.0 L1514.5 743.0 L1515.5 747.0 L1516.5 750.0 L1517.5 754.0 L1519.5 758.0 L1520.5 762.0 L1521.5 765.0 L1522.5 767.0 L1524.5 769.0 L1525.5 771.0 L1526.5 770.0 L1527.5 758.0 L1528.5 738.0 L1530.5 717.0 L1531.5 699.0 L1532.5 690.0 L1533.5 691.0 L1535.5 695.0 L1536.5 700.0 L1537.5 704.0 L1538.5 709.0 L1540.5 714.0 L1541.5 718.0 L1542.5 725.0 L1543.5 731.0 L1545.5 737.0 L1546.5 744.0 L1547.5 750.0 L1548.5 755.0 L1550.5 756.0 L1551.5 744.0 L1552.5 732.0 L1553.5 719.0 L1554.5 709.0 L1556.5 708.0 L1557.5 712.0 L1558.5 716.0 L1559.5 720.0 L1561.5 724.0M1567.5 746.0 L1568.5 751.0 L1569.5 755.0 L1571.5 759.0 L1572.5 763.0 L1573.5 765.0 L1574.5 767.0 L1575.5 767.0 L1577.5 757.0 L1578.5 746.0 L1579.5 735.0 L1580.5 726.0 L1582.5 725.0 L1583.5 727.0 L1584.5 730.0 L1585.5 733.0 L1587.5 736.0 L1588.5 739.0 L1589.5 741.0 L1590.5 745.0 L1592.5 748.0 L1593.5 752.0 L1594.5 756.0 L1595.5 760.0 L1597.5 763.0 L1598.5 766.0 L1599.5 768.0 L1600.5 768.0 L1601.5 760.0 L1603.5 749.0 L1604.5 737.0 L1605.5 728.0 L1606.5 724.0 L1608.5 726.0 L1609.5 729.0 L1610.5 732.0 L1611.5 735.0 L1613.5 738.0 L1614.5 741.0 L1615.5 744.0 L1616.5 747.0 L1618.5 751.0 L1619.5 755.0 L1620.5 759.0 L1621.5 763.0 L1623.5 765.0 L1624.5 768.0 L1625.5 769.0 L1626.5 771.0 L1627.5 773.0 L1629.5 770.0 L1630.5 758.0 L1631.5 746.0 L1632.5 735.0 L1634.5 726.0 L1635.5 725.0 L1636.5 728.0 L1637.5 731.0 L1639.5 734.0 L1640.5 737.0 L1641.5 740.0 L1642.5 744.0 L1644.5 747.0 L1645.5 751.0 L1646.5 755.0 L1647.5 759.0 L1648.5 763.0 L1650.5 765.0 L1651.5 768.0 L1652.5 769.0 L1653.5 771.0 L1655.5 766.0 L1656.5 746.0 L1657.5 725.0 L1658.5 705.0 L1660.5 690.0 L1661.5 688.0 L1662.5 691.0 L1663.5 696.0 L1665.5 701.0 L1666.5 705.0 L1667.5 710.0 L1668.5 715.0 L1670.5 721.0 L1671.5 727.0 L1672.5 734.0 L1673.5 741.0 L1674.5 747.0 L1676.5 752.0 L1677.5 757.0 L1678.5 758.0 L1679.5 751.0 L1681.5 739.0 L1682.5 727.0 L1683.5 717.0 L1684.5 713.0 L1686.5 716.0 L1687.5 719.0 L1688.5 724.0 L1689.5 727.0 L1691.5 731.0 L1692.5 734.0 L1693.5 738.0 L1694.5 742.0 L1695.5 747.0 L1697.5 751.0 L1698.5 756.0 L1699.5 760.0 L1700.5 763.0 L1702.5 766.0 L1703.5 768.0 L1704.5 768.0 L1705.5 760.0 L1707.5 749.0 L1708.5 737.0 L1709.5 727.0 L1710.5 722.0 L1712.5 724.0 L1713.5 727.0 L1714.5 730.0 L1715.5 733.0 L1717.5 736.0 L1718.5 739.0 L1719.5 742.0 L1720.5 746.0 L1721.5 750.0 L1723.5 754.0 L1724.5 758.0 L1725.5 762.0 L1726.5 765.0 L1728.5 767.0 L1729.5 769.0 L1730.5 769.0 L1731.5 760.0 L1733.5 748.0 L1734.5 735.0 L1735.5 724.0 L1736.5 719.0 L1738.5 721.0 L1739.5 723.0 L1740.5 727.0 L1741.5 730.0 L1743.5 733.0 L1744.5 736.0 L1745.5 739.0 L1746.5 744.0 L1747.5 748.0 L1749.5 752.0 L1750.5 757.0 L1751.5 760.0 L1752.5 764.0 L1754.5 766.0 L1755.5 768.0 L1756.5 768.0 L1757.5 761.0 L1759.5 749.0 L1760.5 737.0 L1761.5 727.0 L1762.5 722.0 L1764.5 724.0 L1765.5 727.0 L1766.5 730.0 L1767.5 733.0 L1768.5 736.0 L1770.5 739.0 L1771.5 742.0 L1772.5 746.0 L1773.5 750.0 L1775.5 754.0 L1776.5 758.0 L1777.5 762.0 L1778.5 765.0 L1780.5 767.0 L1781.5 769.0 L1782.5 771.0 L1783.5 769.0 L1785.5 752.0 L1786.5 731.0 L1787.5 711.0 L1788.5 694.0 L1790.5 687.0 L1791.5 691.0 L1792.5 695.0 L1793.5 700.0 L1794.5 704.0 L1796.5 709.0 L1797.5 714.0 L1798.5 719.0 L1799.5 725.0 L1801.5 732.0 L1802.5 739.0 L1803.5 746.0 L1804.5 751.0 L1806.5 756.0 L1807.5 759.0 L1808.5 761.0 L1809.5 752.0 L1811.5 739.0 L1812.5 724.0 L1813.5 713.0 L1814.5 707.0 L1816.5 709.0 L1817.5 713.0 L1818.5 717.0 L1819.5 721.0 L1820.5 725.0 L1822.5 729.0 L1823.5 733.0 L1824.5 737.0 L1825.5 743.0 L1827.5 747.0 L1828.5 753.0 L1829.5 757.0 L1830.5 761.0 L1832.5 764.0 L1833.5 766.0 L1834.5 767.0 L1835.5 760.0 L1837.5 748.0 L1838.5 736.0 L1839.5 726.0 L1840.5 721.0 L1841.5 723.0 L1843.5 727.0 L1844.5 730.0 L1845.5 734.0 L1846.5 737.0 L1848.5 740.0 L1849.5 744.0 L1850.5 748.0 L1851.5 752.0 L1853.5 757.0 L1854.5 760.0 L1855.5 763.0 L1856.5 766.0 L1858.5 768.0 L1859.5 770.0 L1860.5 770.0 L1861.5 762.0 L1863.5 750.0 L1864.5 737.0 L1865.5 726.0 L1866.5 721.0 L1867.5 722.0 L1869.5 726.0 L1870.5 729.0 L1871.5 733.0 L1872.5 736.0 L1874.5 739.0 L1875.5 743.0 L1876.5 747.0 L1877.5 751.0 L1879.5 756.0" fill="none" stroke="#000099" stroke-width="1.2"/><path d="M97.5 750.0 L98.5 750.0 L100.5 751.0 L101.5 751.0 L102.5 754.0 L103.5 757.0 L104.5 759.0 L106.5 762.0 L107.5 764.0 L108.5 767.0 L109.5 769.0 L111.5 771.0 L112.5 773.0 L113.5 775.0 L114.5 776.0 L116.5 778.0 L117.5 779.0 L118.5 779.0 L119.5 754.0 L121.5 750.0 L122.5 749.0 L123.5 750.0 L124.5 749.0 L126.5 749.0 L127.5 751.0 L128.5 754.0 L129.5 757.0 L130.5 760.0 L132.5 762.0 L133.5 765.0 L134.5 767.0 L135.5 769.0 L137.5 771.0 L138.5 773.0 L139.5 775.0 L140.5 777.0 L142.5 778.0 L143.5 779.0 L144.5 779.0 L145.5 737.0 L147.5 726.0 L148.5 707.0 L149.5 698.0 L150.5 698.0 L151.5 703.0 L153.5 710.0 L154.5 718.0 L155.5 725.0 L156.5 733.0 L158.5 741.0 L159.5 748.0 L160.5 755.0 L161.5 759.0 L163.5 762.0 L164.5 764.0 L165.5 767.0 L166.5 769.0 L168.5 772.0 L169.5 774.0 L170.5 777.0 L171.5 761.0 L173.5 757.0 L174.5 757.0 L175.5 757.0 L176.5 757.0 L177.5 757.0 L179.5 759.0 L180.5 762.0 L181.5 764.0 L182.5 766.0 L184.5 767.0 L185.5 769.0 L186.5 771.0 L187.5 773.0 L189.5 774.0 L190.5 775.0 L191.5 777.0 L192.5 778.0 L194.5 779.0 L195.5 779.0 L196.5 760.0 L197.5 744.0 L198.5 743.0 L200.5 743.0 L201.5 743.0 L202.5 743.0 L203.5 746.0 L205.5 749.0 L206.5 753.0 L207.5 756.0 L208.5 759.0 L210.5 762.0 L211.5 765.0 L212.5 767.0 L213.5 770.0 L215.5 772.0 L216.5 774.0 L217.5 776.0 L218.5 778.0 L220.5 779.0 L221.5 772.0 L222.5 751.0 L223.5 751.0 L224.5 752.0 L226.5 751.0 L227.5 750.0 L228.5 752.0 L229.5 755.0 L231.5 757.0 L232.5 760.0 L233.5 762.0 L234.5 765.0 L236.5 767.0 L237.5 769.0 L238.5 771.0 L239.5 773.0 L241.5 775.0 L242.5 776.0 L243.5 778.0 L244.5 779.0 L246.5 779.0 L247.5 771.0 L248.5 746.0 L249.5 746.0 L250.5 747.0 L252.5 747.0 L253.5 746.0 L254.5 747.0 L255.5 750.0 L257.5 754.0 L258.5 756.0 L259.5 759.0 L260.5 762.0 L262.5 765.0 L263.5 767.0 L264.5 770.0 L265.5 772.0 L267.5 774.0 L268.5 776.0 L269.5 777.0 L270.5 779.0 L271.5 779.0 L273.5 768.0 L274.5 728.0 L275.5 717.0 L276.5 701.0 L278.5 700.0 L279.5 702.0 L280.5 707.0 L281.5 715.0 L283.5 722.0 L284.5 730.0 L285.5 737.0 L286.5 744.0 L288.5 752.0 L289.5 758.0 L290.5 760.0 L291.5 763.0 L293.5 765.0 L294.5 768.0 L295.5 770.0 L296.5 773.0 L297.5 775.0 L299.5 757.0 L300.5 759.0 L301.5 758.0 L302.5 759.0 L304.5 759.0 L305.5 760.0 L306.5 762.0 L307.5 763.0 L309.5 765.0 L310.5 767.0 L311.5 769.0 L312.5 770.0 L314.5 772.0 L315.5 773.0 L316.5 775.0 L317.5 776.0 L319.5 777.0 L320.5 778.0 L321.5 779.0 L322.5 779.0 L323.5 779.0 L325.5 773.0 L326.5 748.0 L327.5 748.0 L328.5 748.0 L330.5 748.0 L331.5 749.0 L332.5 751.0 L333.5 754.0 L335.5 757.0 L336.5 759.0 L337.5 762.0 L338.5 764.0 L340.5 767.0 L341.5 769.0 L342.5 771.0 L343.5 773.0 L344.5 775.0 L346.5 777.0 L347.5 778.0 L348.5 779.0 L349.5 779.0 L351.5 773.0 L352.5 743.0 L353.5 744.0 L354.5 743.0 L356.5 744.0 L357.5 744.0 L358.5 745.0 L359.5 749.0 L361.5 752.0 L362.5 755.0 L363.5 758.0 L364.5 761.0 L366.5 764.0 L367.5 767.0 L368.5 769.0 L369.5 772.0 L370.5 774.0 L372.5 776.0 L373.5 778.0 L374.5 779.0 L375.5 779.0 L377.5 775.0 L378.5 750.0 L379.5 750.0 L380.5 750.0 L382.5 750.0 L383.5 751.0 L384.5 752.0 L385.5 755.0 L387.5 758.0 L388.5 760.0 L389.5 763.0 L390.5 765.0 L392.5 768.0 L393.5 770.0 L394.5 772.0 L395.5 774.0 L396.5 775.0 L398.5 777.0 L399.5 778.0 L400.5 779.0 L401.5 779.0 L403.5 773.0 L404.5 724.0 L405.5 707.0 L406.5 702.0 L408.5 703.0 L409.5 706.0 L410.5 713.0 L411.5 720.0 L413.5 727.0 L414.5 734.0 L415.5 742.0 L416.5 749.0 L417.5 756.0 L419.5 760.0 L420.5 762.0 L421.5 765.0 L422.5 767.0 L424.5 769.0 L425.5 772.0 L426.5 774.0 L427.5 777.0 L429.5 776.0 L430.5 758.0 L431.5 758.0 L432.5 758.0 L434.5 758.0 L435.5 758.0 L436.5 760.0 L437.5 762.0 L439.5 764.0 L440.5 765.0 L441.5 767.0 L442.5 769.0 L443.5 771.0 L445.5 772.0 L446.5 774.0 L447.5 775.0 L448.5 776.0 L450.5 778.0 L451.5 779.0 L452.5 779.0 L453.5 779.0 L455.5 776.0 L456.5 746.0 L457.5 747.0 L458.5 747.0 L460.5 747.0 L461.5 748.0 L462.5 750.0 L463.5 753.0 L464.5 756.0 L466.5 758.0 L467.5 761.0 L468.5 764.0 L469.5 766.0 L471.5 769.0 L472.5 771.0 L473.5 773.0 L474.5 775.0 L476.5 777.0 L477.5 776.0 L478.5 773.0 L479.5 774.0 L481.5 774.0 L482.5 774.0 L483.5 774.0 L484.5 774.0 L486.5 774.0 L487.5 775.0 L488.5 775.0 L489.5 776.0 L490.5 776.0 L492.5 777.0 L493.5 767.0 L494.5 703.0 L495.5 661.0 L497.5 639.0 L498.5 639.0 L499.5 667.0 L500.5 712.0 L502.5 718.0 L503.5 730.0 L504.5 730.0 L505.5 739.0 L507.5 740.0 L508.5 745.0 L509.5 756.0 L510.5 764.0 L512.5 767.0 L513.5 777.0 L514.5 777.0 L515.5 777.0 L516.5 777.0 L518.5 777.0 L519.5 770.0 L520.5 720.0 L521.5 684.0 L523.5 666.0 L524.5 666.0 L525.5 687.0 L526.5 724.0 L528.5 729.0 L529.5 740.0 L530.5 740.0 L531.5 746.0 L533.5 748.0 L534.5 751.0 L535.5 760.0 L536.5 767.0 L537.5 769.0 L539.5 777.0 L540.5 777.0 L541.5 777.0 L542.5 777.0 L544.5 775.0 L545.5 743.0 L546.5 708.0 L547.5 691.0 L549.5 690.0 L550.5 700.0 L551.5 730.0 L552.5 739.0 L554.5 748.0 L555.5 748.0 L556.5 751.0 L557.5 754.0 L559.5 755.0 L560.5 764.0 L561.5 768.0 L562.5 771.0 L563.5 778.0 L565.5 778.0 L566.5 778.0 L567.5 778.0 L568.5 778.0 L570.5 775.0 L571.5 740.0 L572.5 697.0 L573.5 678.0 L575.5 676.0 L576.5 687.0 L577.5 722.0 L578.5 733.0 L580.5 743.0 L581.5 743.0 L582.5 747.0 L583.5 750.0 L585.5 750.0 L586.5 762.0 L587.5 766.0 L588.5 770.0 L589.5 777.0 L591.5 777.0 L592.5 777.0 L593.5 777.0 L594.5 777.0 L596.5 775.0 L597.5 744.0 L598.5 704.0 L599.5 686.0 L601.5 684.0 L602.5 693.0 L603.5 726.0 L604.5 736.0 L606.5 746.0 L607.5 746.0 L608.5 749.0 L609.5 753.0 L610.5 753.0 L612.5 763.0 L613.5 767.0 L614.5 771.0 L615.5 777.0 L617.5 778.0 L618.5 778.0 L619.5 778.0 L620.5 778.0 L622.5 778.0 L623.5 771.0 L624.5 708.0 L625.5 657.0 L627.5 632.0 L628.5 632.0 L629.5 656.0 L630.5 705.0 L632.5 728.0 L633.5 728.0 L634.5 733.0 L635.5 738.0 L636.5 738.0 L638.5 754.0 L639.5 760.0 L640.5 766.0 L641.5 776.0 L643.5 777.0 L644.5 777.0 L645.5 777.0 L646.5 777.0 L648.5 775.0 L649.5 736.0 L650.5 687.0 L651.5 665.0 L653.5 662.0 L654.5 672.0 L655.5 713.0 L656.5 726.0 L657.5 738.0 L659.5 738.0 L660.5 742.0 L661.5 746.0 L662.5 746.0 L664.5 759.0 L665.5 763.0 L666.5 769.0 L667.5 776.0 L669.5 777.0 L670.5 777.0 L671.5 777.0 L672.5 777.0 L674.5 776.0 L675.5 746.0 L676.5 703.0 L677.5 685.0 L679.5 682.0 L680.5 690.0 L681.5 724.0 L682.5 735.0 L683.5 745.0 L685.5 745.0 L686.5 748.0 L687.5 752.0 L688.5 752.0 L690.5 763.0 L691.5 766.0 L692.5 771.0 L693.5 777.0 L695.5 778.0 L696.5 778.0 L697.5 778.0 L698.5 778.0 L700.5 757.0 L701.5 705.0 L702.5 686.0 L703.5 680.0 L705.5 680.0 L706.5 716.0 L707.5 734.0 L708.5 742.0 L709.5 744.0 L711.5 746.0 L712.5 752.0 L713.5 752.0 L714.5 761.0 L716.5 764.0 L717.5 770.0 L718.5 775.0 L719.5 778.0 L721.5 778.0 L722.5 778.0 L723.5 778.0 L724.5 778.0 L726.5 761.0 L727.5 710.0 L728.5 692.0 L729.5 686.0 L730.5 686.0 L732.5 720.0 L733.5 737.0 L734.5 744.0 L735.5 747.0 L737.5 748.0 L738.5 753.0 L739.5 753.0 L740.5 762.0 L742.5 764.0 L743.5 771.0 L744.5 775.0 L745.5 778.0 L747.5 778.0 L748.5 778.0 L749.5 778.0 L750.5 778.0 L752.5 779.0 L753.5 732.0 L754.5 660.0 L755.5 632.0 L756.5 626.0 L758.5 635.0 L759.5 690.0 L760.5 721.0 L761.5 726.0 L763.5 727.0 L764.5 736.0 L765.5 736.0 L766.5 751.0 L768.5 755.0 L769.5 766.0 L770.5 772.0 L771.5 776.0 L773.5 776.0 L774.5 776.0 L775.5 776.0 L776.5 762.0 L778.5 699.0 L779.5 682.0 L780.5 670.0 L781.5 670.0 L782.5 702.0 L784.5 730.0 L785.5 735.0 L786.5 741.0 L787.5 741.0 L789.5 749.0 L790.5 749.0 L791.5 756.0 L792.5 761.0 L794.5 770.0 L795.5 772.0 L796.5 777.0 L797.5 777.0 L799.5 777.0 L800.5 777.0 L801.5 777.0 L802.5 766.0 L803.5 709.0 L805.5 689.0 L806.5 678.0 L807.5 678.0 L808.5 707.0 L810.5 734.0 L811.5 738.0 L812.5 744.0 L813.5 744.0 L815.5 751.0 L816.5 751.0 L817.5 758.0 L818.5 762.0 L820.5 770.0 L821.5 772.0 L822.5 777.0 L823.5 777.0 L825.5 777.0 L826.5 777.0 L827.5 777.0 L828.5 768.0 L829.5 720.0 L831.5 702.0 L832.5 692.0 L833.5 692.0 L834.5 716.0 L836.5 741.0 L837.5 749.0 L838.5 749.0 L839.5 754.0 L841.5 755.0 L842.5 758.0 L843.5 765.0 L844.5 770.0 L846.5 772.0 L847.5 778.0 L848.5 778.0 L849.5 778.0 L850.5 778.0 L852.5 778.0 L853.5 771.0 L854.5 731.0 L855.5 705.0 L857.5 692.0 L858.5 692.0 L859.5 709.0 L860.5 738.0 L862.5 741.0 L863.5 749.0 L864.5 749.0 L865.5 754.0 L867.5 755.0 L868.5 758.0 L869.5 765.0 L870.5 770.0 L872.5 772.0 L873.5 778.0 L874.5 778.0 L875.5 778.0 L876.5 778.0 L878.5 778.0 L879.5 779.0 L880.5 762.0 L881.5 680.0 L883.5 648.0 L884.5 630.0 L885.5 630.0 L886.5 670.0 L888.5 712.0 L889.5 717.0 L890.5 727.0 L891.5 727.0 L893.5 738.0 L894.5 738.0 L895.5 746.0 L896.5 754.0 L898.5 766.0 L899.5 769.0 L900.5 776.0 L901.5 776.0 L902.5 776.0 L904.5 773.0 L905.5 735.0 L906.5 695.0 L907.5 677.0 L909.5 676.0 L910.5 688.0 L911.5 723.0 L912.5 733.0 L914.5 743.0 L915.5 743.0 L916.5 747.0 L917.5 750.0 L919.5 751.0 L920.5 762.0 L921.5 766.0 L922.5 770.0 L923.5 777.0 L925.5 777.0 L926.5 777.0 L927.5 777.0 L928.5 777.0 L930.5 778.0 L931.5 773.0 L932.5 733.0 L933.5 705.0 L935.5 690.0 L936.5 690.0 L937.5 706.0 L938.5 735.0 L940.5 740.0 L941.5 748.0 L942.5 748.0 L943.5 753.0 L945.5 754.0 L946.5 757.0 L947.5 764.0 L948.5 769.0 L949.5 771.0 L951.5 778.0 L952.5 778.0 L953.5 778.0 L954.5 778.0 L956.5 778.0 L957.5 771.0 L958.5 726.0 L959.5 691.0 L961.5 674.0 L962.5 674.0 L963.5 693.0 L964.5 727.0 L966.5 732.0 L967.5 742.0 L968.5 742.0 L969.5 748.0 L971.5 750.0 L972.5 753.0 L973.5 761.0 L974.5 768.0 L975.5 770.0 L977.5 777.0 L978.5 777.0 L979.5 777.0 L980.5 777.0 L982.5 777.0 L983.5 772.0 L984.5 732.0 L985.5 700.0 L987.5 684.0 L988.5 684.0 L989.5 700.0 L990.5 732.0 L992.5 737.0 L993.5 746.0 L994.5 746.0 L995.5 751.0 L996.5 753.0 L998.5 755.0 L999.5 763.0 L1000.5 769.0 L1001.5 771.0 L1003.5 778.0 L1004.5 778.0 L1005.5 778.0 L1006.5 778.0 L1008.5 778.0 L1009.5 769.0 L1010.5 706.0 L1011.5 655.0 L1013.5 628.0 L1014.5 628.0 L1015.5 654.0 L1016.5 704.0 L1018.5 712.0 L1019.5 727.0 L1020.5 727.0 L1021.5 734.0 L1022.5 737.0 L1024.5 741.0 L1025.5 754.0 L1026.5 762.0 L1027.5 766.0 L1029.5 776.0 L1030.5 776.0 L1031.5 776.0 L1032.5 776.0 L1034.5 775.0 L1035.5 740.0 L1036.5 695.0 L1037.5 675.0 L1039.5 672.0 L1040.5 681.0 L1041.5 719.0 L1042.5 731.0 L1043.5 742.0 L1045.5 742.0 L1046.5 745.0 L1047.5 749.0 L1048.5 749.0 L1050.5 761.0 L1051.5 765.0 L1052.5 770.0 L1053.5 777.0 L1055.5 777.0 L1056.5 777.0 L1057.5 777.0 L1058.5 777.0 L1060.5 776.0 L1061.5 749.0 L1062.5 709.0 L1063.5 692.0 L1065.5 690.0 L1066.5 697.0 L1067.5 728.0 L1068.5 746.0 L1069.5 748.0 L1071.5 749.0 L1072.5 754.0 L1073.5 754.0 L1074.5 763.0 L1076.5 765.0 L1077.5 771.0 L1078.5 775.0 L1079.5 778.0 L1081.5 778.0 L1082.5 778.0 L1083.5 778.0 L1084.5 778.0 L1086.5 756.0 L1087.5 701.0 L1088.5 681.0 L1089.5 674.0 L1091.5 674.0 L1092.5 713.0 L1093.5 732.0 L1094.5 739.0 L1095.5 742.0 L1097.5 744.0 L1098.5 750.0 L1099.5 750.0 L1100.5 760.0 L1102.5 763.0 L1103.5 770.0 L1104.5 775.0 L1105.5 777.0 L1107.5 777.0 L1108.5 777.0 L1109.5 777.0 L1110.5 777.0 L1112.5 761.0 L1113.5 710.0 L1114.5 692.0 L1115.5 686.0 L1116.5 686.0 L1118.5 720.0 L1119.5 737.0 L1120.5 744.0 L1121.5 747.0 L1123.5 748.0 L1124.5 753.0 L1125.5 753.0 L1126.5 762.0 L1128.5 764.0 L1129.5 771.0 L1130.5 775.0 L1131.5 778.0 L1133.5 778.0 L1134.5 778.0 L1135.5 778.0 L1136.5 778.0 L1138.5 752.0 L1139.5 669.0 L1140.5 641.0 L1141.5 630.0 L1142.5 630.0 L1144.5 684.0 L1145.5 712.0 L1146.5 722.0 L1147.5 727.0 L1149.5 729.0 L1150.5 738.0 L1151.5 738.0 L1152.5 752.0 L1154.5 755.0 L1155.5 766.0 L1156.5 772.0 L1157.5 776.0 L1159.5 776.0 L1160.5 776.0 L1161.5 776.0 L1162.5 762.0 L1164.5 701.0 L1165.5 680.0 L1166.5 668.0 L1167.5 668.0 L1168.5 701.0 L1170.5 729.0 L1171.5 734.0 L1172.5 740.0 L1173.5 740.0 L1175.5 748.0 L1176.5 748.0 L1177.5 756.0 L1178.5 760.0 L1180.5 769.0 L1181.5 772.0 L1182.5 777.0 L1183.5 777.0 L1185.5 777.0 L1186.5 777.0 L1187.5 777.0 L1188.5 779.0 L1189.5 765.0 L1191.5 716.0 L1192.5 700.0 L1193.5 694.0 L1194.5 694.0 L1196.5 724.0 L1197.5 741.0 L1198.5 746.0 L1199.5 749.0 L1201.5 750.0 L1202.5 755.0 L1203.5 755.0 L1204.5 763.0 L1206.5 765.0 L1207.5 772.0 L1208.5 775.0 L1209.5 778.0 L1211.5 778.0 L1212.5 778.0 L1213.5 778.0 L1214.5 766.0 L1215.5 713.0 L1217.5 693.0 L1218.5 682.0 L1219.5 682.0 L1220.5 709.0 L1222.5 735.0 L1223.5 739.0 L1224.5 745.0 L1225.5 745.0 L1227.5 752.0 L1228.5 752.0 L1229.5 758.0 L1230.5 763.0 L1232.5 771.0 L1233.5 773.0 L1234.5 778.0 L1235.5 778.0 L1236.5 778.0 L1238.5 778.0 L1239.5 778.0 L1240.5 768.0 L1241.5 719.0 L1243.5 700.0 L1244.5 690.0 L1245.5 690.0 L1246.5 715.0 L1248.5 739.0 L1249.5 742.0 L1250.5 748.0 L1251.5 748.0 L1253.5 754.0 L1254.5 754.0 L1255.5 760.0 L1256.5 764.0 L1258.5 771.0 L1259.5 773.0 L1260.5 778.0 L1261.5 778.0 L1262.5 778.0 L1264.5 778.0 L1265.5 778.0 L1266.5 779.0 L1267.5 756.0 L1269.5 672.0 L1270.5 645.0 L1271.5 632.0 L1272.5 632.0 L1274.5 681.0 L1275.5 718.0 L1276.5 728.0 L1277.5 728.0 L1279.5 738.0 L1280.5 738.0 L1281.5 747.0 L1282.5 754.0 L1284.5 766.0 L1285.5 769.0 L1286.5 777.0 L1287.5 777.0 L1288.5 777.0 L1290.5 777.0 L1291.5 777.0 L1292.5 763.0 L1293.5 705.0 L1295.5 680.0 L1296.5 666.0 L1297.5 666.0 L1298.5 696.0 L1300.5 728.0 L1301.5 732.0 L1302.5 740.0 L1303.5 740.0 L1305.5 748.0 L1306.5 748.0 L1307.5 754.0 L1308.5 760.0 L1309.5 769.0 L1311.5 771.0 L1312.5 777.0 L1313.5 777.0 L1314.5 777.0 L1316.5 777.0 L1317.5 771.0 L1318.5 731.0 L1319.5 703.0 L1321.5 688.0 L1322.5 688.0 L1323.5 705.0 L1324.5 735.0 L1326.5 739.0 L1327.5 747.0 L1328.5 747.0 L1329.5 752.0 L1331.5 754.0 L1332.5 756.0 L1333.5 764.0 L1334.5 769.0 L1335.5 771.0 L1337.5 778.0 L1338.5 778.0 L1339.5 778.0 L1340.5 778.0 L1342.5 778.0 L1343.5 778.0 L1344.5 768.0 L1345.5 714.0 L1347.5 689.0 L1348.5 676.0 L1349.5 676.0 L1350.5 702.0 L1352.5 733.0 L1353.5 736.0 L1354.5 743.0 L1355.5 743.0 L1357.5 750.0 L1358.5 750.0 L1359.5 756.0 L1360.5 762.0 L1361.5 770.0 L1363.5 772.0 L1364.5 777.0 L1365.5 777.0 L1366.5 777.0 L1368.5 777.0 L1369.5 777.0 L1370.5 769.0 L1371.5 720.0 L1373.5 697.0 L1374.5 684.0 L1375.5 684.0 L1376.5 707.0 L1378.5 736.0 L1379.5 739.0 L1380.5 746.0 L1381.5 746.0 L1382.5 753.0 L1384.5 753.0 L1385.5 758.0 L1386.5 763.0 L1387.5 770.0 L1389.5 772.0 L1390.5 778.0 L1391.5 778.0 L1392.5 778.0 L1394.5 778.0 L1395.5 778.0 L1396.5 763.0 L1397.5 685.0 L1399.5 647.0 L1400.5 626.0 L1401.5 626.0 L1402.5 663.0 L1404.5 710.0 L1405.5 714.0 L1406.5 726.0 L1407.5 726.0 L1408.5 736.0 L1410.5 736.0 L1411.5 744.0 L1412.5 753.0 L1413.5 765.0 L1415.5 767.0 L1416.5 776.0 L1417.5 776.0 L1418.5 776.0 L1420.5 776.0 L1421.5 776.0 L1422.5 767.0 L1423.5 711.0 L1425.5 682.0 L1426.5 666.0 L1427.5 666.0 L1428.5 692.0 L1430.5 728.0 L1431.5 740.0 L1432.5 740.0 L1433.5 745.0 L1434.5 748.0 L1436.5 750.0 L1437.5 760.0 L1438.5 766.0 L1439.5 769.0 L1441.5 777.0 L1442.5 777.0 L1443.5 777.0 L1444.5 777.0 L1446.5 777.0 L1447.5 772.0 L1448.5 731.0 L1449.5 696.0 L1451.5 678.0 L1452.5 678.0 L1453.5 694.0 L1454.5 727.0 L1455.5 734.0 L1457.5 744.0 L1458.5 744.0 L1459.5 749.0 L1460.5 751.0 L1462.5 753.0 L1463.5 762.0 L1464.5 767.0 L1465.5 770.0 L1467.5 777.0 L1468.5 777.0 L1469.5 777.0 L1470.5 777.0 L1472.5 777.0 L1473.5 773.0 L1474.5 731.0 L1475.5 693.0 L1477.5 674.0 L1478.5 674.0 L1479.5 690.0 L1480.5 725.0 L1481.5 742.0 L1483.5 742.0 L1484.5 746.0 L1485.5 750.0 L1486.5 750.0 L1488.5 761.0 L1489.5 765.0 L1490.5 770.0 L1491.5 776.0 L1493.5 777.0 L1494.5 777.0 L1495.5 777.0 L1496.5 777.0 L1498.5 777.0 L1499.5 775.0 L1500.5 738.0 L1501.5 704.0 L1502.5 687.0 L1504.5 686.0 L1505.5 700.0 L1506.5 731.0 L1507.5 738.0 L1509.5 747.0 L1510.5 747.0 L1511.5 751.0 L1512.5 753.0 L1514.5 755.0 L1515.5 764.0 L1516.5 768.0 L1517.5 771.0 L1519.5 778.0 L1520.5 778.0 L1521.5 778.0 L1522.5 778.0 L1524.5 778.0 L1525.5 778.0 L1526.5 766.0 L1527.5 690.0 L1528.5 644.0 L1530.5 620.0 L1531.5 620.0 L1532.5 654.0 L1533.5 705.0 L1535.5 710.0 L1536.5 724.0 L1537.5 724.0 L1538.5 733.0 L1540.5 735.0 L1541.5 741.0 L1542.5 752.0 L1543.5 763.0 L1545.5 766.0 L1546.5 776.0 L1547.5 776.0 L1548.5 776.0 L1550.5 756.0 L1551.5 692.0 L1552.5 672.0 L1553.5 664.0 L1554.5 664.0 L1556.5 706.0 L1557.5 728.0 L1558.5 735.0 L1559.5 739.0 L1561.5 740.0M1567.5 769.0 L1568.5 774.0 L1569.5 777.0 L1571.5 777.0 L1572.5 777.0 L1573.5 777.0 L1574.5 777.0 L1575.5 764.0 L1577.5 711.0 L1578.5 694.0 L1579.5 686.0 L1580.5 686.0 L1582.5 719.0 L1583.5 738.0 L1584.5 744.0 L1585.5 747.0 L1587.5 748.0 L1588.5 753.0 L1589.5 753.0 L1590.5 762.0 L1592.5 764.0 L1593.5 771.0 L1594.5 775.0 L1595.5 778.0 L1597.5 778.0 L1598.5 778.0 L1599.5 778.0 L1600.5 766.0 L1601.5 715.0 L1603.5 697.0 L1604.5 686.0 L1605.5 686.0 L1606.5 712.0 L1608.5 737.0 L1609.5 741.0 L1610.5 747.0 L1611.5 747.0 L1613.5 753.0 L1614.5 753.0 L1615.5 759.0 L1616.5 764.0 L1618.5 771.0 L1619.5 773.0 L1620.5 778.0 L1621.5 778.0 L1623.5 778.0 L1624.5 778.0 L1625.5 778.0 L1626.5 779.0 L1627.5 779.0 L1629.5 754.0 L1630.5 706.0 L1631.5 688.0 L1632.5 684.0 L1634.5 688.0 L1635.5 722.0 L1636.5 742.0 L1637.5 746.0 L1639.5 746.0 L1640.5 753.0 L1641.5 753.0 L1642.5 761.0 L1644.5 763.0 L1645.5 771.0 L1646.5 774.0 L1647.5 778.0 L1648.5 778.0 L1650.5 778.0 L1651.5 778.0 L1652.5 778.0 L1653.5 778.0 L1655.5 737.0 L1656.5 655.0 L1657.5 625.0 L1658.5 616.0 L1660.5 622.0 L1661.5 681.0 L1662.5 706.0 L1663.5 720.0 L1665.5 722.0 L1666.5 726.0 L1667.5 734.0 L1668.5 734.0 L1670.5 752.0 L1671.5 755.0 L1672.5 765.0 L1673.5 773.0 L1674.5 776.0 L1676.5 776.0 L1677.5 776.0 L1678.5 764.0 L1679.5 706.0 L1681.5 686.0 L1682.5 672.0 L1683.5 672.0 L1684.5 701.0 L1686.5 731.0 L1687.5 735.0 L1688.5 742.0 L1689.5 742.0 L1691.5 750.0 L1692.5 750.0 L1693.5 756.0 L1694.5 761.0 L1695.5 770.0 L1697.5 772.0 L1698.5 777.0 L1699.5 777.0 L1700.5 777.0 L1702.5 777.0 L1703.5 777.0 L1704.5 768.0 L1705.5 716.0 L1707.5 694.0 L1708.5 682.0 L1709.5 682.0 L1710.5 707.0 L1712.5 735.0 L1713.5 739.0 L1714.5 745.0 L1715.5 745.0 L1717.5 752.0 L1718.5 752.0 L1719.5 757.0 L1720.5 763.0 L1721.5 771.0 L1723.5 772.0 L1724.5 778.0 L1725.5 778.0 L1726.5 778.0 L1728.5 778.0 L1729.5 778.0 L1730.5 767.0 L1731.5 713.0 L1733.5 688.0 L1734.5 674.0 L1735.5 674.0 L1736.5 701.0 L1738.5 732.0 L1739.5 735.0 L1740.5 743.0 L1741.5 743.0 L1743.5 750.0 L1744.5 750.0 L1745.5 756.0 L1746.5 762.0 L1747.5 770.0 L1749.5 771.0 L1750.5 777.0 L1751.5 777.0 L1752.5 777.0 L1754.5 777.0 L1755.5 777.0 L1756.5 768.0 L1757.5 718.0 L1759.5 695.0 L1760.5 682.0 L1761.5 682.0 L1762.5 706.0 L1764.5 735.0 L1765.5 738.0 L1766.5 745.0 L1767.5 745.0 L1768.5 752.0 L1770.5 752.0 L1771.5 757.0 L1772.5 763.0 L1773.5 770.0 L1775.5 772.0 L1776.5 778.0 L1777.5 778.0 L1778.5 778.0 L1780.5 778.0 L1781.5 778.0 L1782.5 779.0 L1783.5 756.0 L1785.5 664.0 L1786.5 634.0 L1787.5 618.0 L1788.5 618.0 L1790.5 669.0 L1791.5 707.0 L1792.5 715.0 L1793.5 723.0 L1794.5 723.0 L1796.5 734.0 L1797.5 734.0 L1798.5 746.0 L1799.5 752.0 L1801.5 765.0 L1802.5 769.0 L1803.5 776.0 L1804.5 776.0 L1806.5 776.0 L1807.5 776.0 L1808.5 764.0 L1809.5 706.0 L1811.5 676.0 L1812.5 658.0 L1813.5 658.0 L1814.5 687.0 L1816.5 725.0 L1817.5 728.0 L1818.5 737.0 L1819.5 737.0 L1820.5 745.0 L1822.5 746.0 L1823.5 751.0 L1824.5 759.0 L1825.5 768.0 L1827.5 770.0 L1828.5 777.0 L1829.5 777.0 L1830.5 777.0 L1832.5 777.0 L1833.5 777.0 L1834.5 769.0 L1835.5 721.0 L1837.5 695.0 L1838.5 680.0 L1839.5 680.0 L1840.5 703.0 L1841.5 735.0 L1843.5 745.0 L1844.5 745.0 L1845.5 750.0 L1846.5 752.0 L1848.5 754.0 L1849.5 763.0 L1850.5 768.0 L1851.5 771.0 L1853.5 778.0 L1854.5 778.0 L1855.5 778.0 L1856.5 778.0 L1858.5 778.0 L1859.5 778.0 L1860.5 769.0 L1861.5 720.0 L1863.5 693.0 L1864.5 678.0 L1865.5 678.0 L1866.5 701.0 L1867.5 733.0 L1869.5 744.0 L1870.5 744.0 L1871.5 749.0 L1872.5 751.0 L1874.5 753.0 L1875.5 762.0 L1876.5 767.0 L1877.5 770.0 L1879.5 777.0" fill="none" stroke="#009900" stroke-width="1.2"/></svg><svg style="left:0px;top:0px" width="1920" height="1200" shape-rendering="crispEdges"><line x1="97.5" y1="572" x2="97.5" y2="784" stroke="#acbbc2" stroke-width="1"/><line x1="92" y1="779.5" x2="1886" y2="779.5" stroke="#acbbc2" stroke-width="1"/></svg><svg style="left:0px;top:0px" width="1920" height="1200"><polygon points="97.5,569 94.5,574.5 100.5,574.5" fill="#fff" stroke="#acbbc2" stroke-width="1"/><polygon points="1889,779.5 1883,776 1883,783" fill="#fff" stroke="#acbbc2" stroke-width="1"/></svg><div class="t" style="right:1834px;top:773.88px;font-size:10.5px;line-height:10.5px;color:#1f2c33;font-weight:normal;">0</div><div class="t" style="right:1834px;top:733.88px;font-size:10.5px;line-height:10.5px;color:#1f2c33;font-weight:normal;">2</div><div class="t" style="right:1834px;top:693.88px;font-size:10.5px;line-height:10.5px;color:#1f2c33;font-weight:normal;">4</div><div class="t" style="right:1834px;top:653.88px;font-size:10.5px;line-height:10.5px;color:#1f2c33;font-weight:normal;">6</div><div class="t" style="right:1834px;top:613.88px;font-size:10.5px;line-height:10.5px;color:#1f2c33;font-weight:normal;">8</div><div class="t" style="right:1834px;top:573.88px;font-size:10.5px;line-height:10.5px;color:#1f2c33;font-weight:normal;">10</div><div class="t" style="left:754.75px;top:553.98px;font-size:15.5px;line-height:15.5px;color:#1f2c33;font-weight:normal;letter-spacing:0.13px;">172.16.3.190 (Web, PostgreSQL, OpenSCADA): CPU load</div><div class="t" style="left:117.9px;top:786px;font-size:10.5px;line-height:10.5px;color:#e0282e;letter-spacing:0.55px;transform-origin:0 0;transform:rotate(-90deg) translate(-100%,-50%);">08:00</div><div class="t" style="left:154.9px;top:786px;font-size:8.5px;line-height:8.5px;color:#1f2c33;letter-spacing:0.64px;transform-origin:0 0;transform:rotate(-90deg) translate(-100%,-50%);">08:30</div><div class="t" style="left:191.9px;top:786px;font-size:10.5px;line-height:10.5px;color:#e0282e;letter-spacing:0.55px;transform-origin:0 0;transform:rotate(-90deg) translate(-100%,-50%);">09:00</div><div class="t" style="left:228.9px;top:786px;font-size:8.5px;line-height:8.5px;color:#1f2c33;letter-spacing:0.64px;transform-origin:0 0;transform:rotate(-90deg) translate(-100%,-50%);">09:30</div><div class="t" style="left:265.9px;top:786px;font-size:10.5px;line-height:10.5px;color:#e0282e;letter-spacing:0.55px;transform-origin:0 0;transform:rotate(-90deg) translate(-100%,-50%);">10:00</div><div class="t" style="left:302.9px;top:786px;font-size:8.5px;line-height:8.5px;color:#1f2c33;letter-spacing:0.64px;transform-origin:0 0;transform:rotate(-90deg) translate(-100%,-50%);">10:30</div><div class="t" style="left:339.9px;top:786px;font-size:10.5px;line-height:10.5px;color:#e0282e;letter-spacing:0.55px;transform-origin:0 0;transform:rotate(-90deg) translate(-100%,-50%);">11:00</div><div class="t" style="left:376.9px;top:786px;font-size:8.5px;line-height:8.5px;color:#1f2c33;letter-spacing:0.64px;transform-origin:0 0;transform:rotate(-90deg) translate(-100%,-50%);">11:30</div><div class="t" style="left:413.9px;top:786px;font-size:10.5px;line-height:10.5px;color:#e0282e;letter-spacing:0.55px;transform-origin:0 0;transform:rotate(-90deg) translate(-100%,-50%);">12:00</div><div class="t" style="left:450.9px;top:786px;font-size:8.5px;line-height:8.5px;color:#1f2c33;letter-spacing:0.64px;transform-origin:0 0;transform:rotate(-90deg) translate(-100%,-50%);">12:30</div><div class="t" style="left:488.9px;top:786px;font-size:10.5px;line-height:10.5px;color:#e0282e;letter-spacing:0.55px;transform-origin:0 0;transform:rotate(-90deg) translate(-100%,-50%);">13:00</div><div class="t" style="left:525.9px;top:786px;font-size:8.5px;line-height:8.5px;color:#1f2c33;letter-spacing:0.64px;transform-origin:0 0;transform:rotate(-90deg) translate(-100%,-50%);">13:30</div><div class="t" style="left:562.9px;top:786px;font-size:10.5px;line-height:10.5px;color:#e0282e;letter-spacing:0.55px;transform-origin:0 0;transform:rotate(-90deg) translate(-100%,-50%);">14:00</div><div class="t" style="left:599.9px;top:786px;font-size:8.5px;line-height:8.5px;color:#1f2c33;letter-spacing:0.64px;transform-origin:0 0;transform:rotate(-90deg) translate(-100%,-50%);">14:30</div><div class="t" style="left:636.9px;top:786px;font-size:10.5px;line-height:10.5px;color:#e0282e;letter-spacing:0.55px;transform-origin:0 0;transform:rotate(-90deg) translate(-100%,-50%);">15:00</div><div class="t" style="left:673.9px;top:786px;font-size:8.5px;line-height:8.5px;color:#1f2c33;letter-spacing:0.64px;transform-origin:0 0;transform:rotate(-90deg) translate(-100%,-50%);">15:30</div><div class="t" style="left:710.9px;top:786px;font-size:10.5px;line-height:10.5px;color:#e0282e;letter-spacing:0.55px;transform-origin:0 0;transform:rotate(-90deg) translate(-100%,-50%);">16:00</div><div class="t" style="left:747.9px;top:786px;font-size:8.5px;line-height:8.5px;color:#1f2c33;letter-spacing:0.64px;transform-origin:0 0;transform:rotate(-90deg) translate(-100%,-50%);">16:30</div><div class="t" style="left:784.9px;top:786px;font-size:10.5px;line-height:10.5px;color:#e0282e;letter-spacing:0.55px;transform-origin:0 0;transform:rotate(-90deg) translate(-100%,-50%);">17:00</div><div class="t" style="left:822.9px;top:786px;font-size:8.5px;line-height:8.5px;color:#1f2c33;letter-spacing:0.64px;transform-origin:0 0;transform:rotate(-90deg) translate(-100%,-50%);">17:30</div><div class="t" style="left:859.9px;top:786px;font-size:10.5px;line-height:10.5px;color:#e0282e;letter-spacing:0.55px;transform-origin:0 0;transform:rotate(-90deg) translate(-100%,-50%);">18:00</div><div class="t" style="left:896.9px;top:786px;font-size:8.5px;line-height:8.5px;color:#1f2c33;letter-spacing:0.64px;transform-origin:0 0;transform:rotate(-90deg) translate(-100%,-50%);">18:30</div><div class="t" style="left:933.9px;top:786px;font-size:10.5px;line-height:10.5px;color:#e0282e;letter-spacing:0.55px;transform-origin:0 0;transform:rotate(-90deg) translate(-100%,-50%);">19:00</div><div class="t" style="left:970.9px;top:786px;font-size:8.5px;line-height:8.5px;color:#1f2c33;letter-spacing:0.64px;transform-origin:0 0;transform:rotate(-90deg) translate(-100%,-50%);">19:30</div><div class="t" style="left:1007.9px;top:786px;font-size:10.5px;line-height:10.5px;color:#e0282e;letter-spacing:0.55px;transform-origin:0 0;transform:rotate(-90deg) translate(-100%,-50%);">20:00</div><div class="t" style="left:1044.9px;top:786px;font-size:8.5px;line-height:8.5px;color:#1f2c33;letter-spacing:0.64px;transform-origin:0 0;transform:rotate(-90deg) translate(-100%,-50%);">20:30</div><div class="t" style="left:1081.9px;top:786px;font-size:10.5px;line-height:10.5px;color:#e0282e;letter-spacing:0.55px;transform-origin:0 0;transform:rotate(-90deg) translate(-100%,-50%);">21:00</div><div class="t" style="left:1118.9px;top:786px;font-size:8.5px;line-height:8.5px;color:#1f2c33;letter-spacing:0.64px;transform-origin:0 0;transform:rotate(-90deg) translate(-100%,-50%);">21:30</div><div class="t" style="left:1156.9px;top:786px;font-size:10.5px;line-height:10.5px;color:#e0282e;letter-spacing:0.55px;transform-origin:0 0;transform:rotate(-90deg) translate(-100%,-50%);">22:00</div><div class="t" style="left:1193.9px;top:786px;font-size:8.5px;line-height:8.5px;color:#1f2c33;letter-spacing:0.64px;transform-origin:0 0;transform:rotate(-90deg) translate(-100%,-50%);">22:30</div><div class="t" style="left:1230.9px;top:786px;font-size:10.5px;line-height:10.5px;color:#e0282e;letter-spacing:0.55px;transform-origin:0 0;transform:rotate(-90deg) translate(-100%,-50%);">23:00</div><div class="t" style="left:1267.9px;top:786px;font-size:8.5px;line-height:8.5px;color:#1f2c33;letter-spacing:0.64px;transform-origin:0 0;transform:rotate(-90deg) translate(-100%,-50%);">23:30</div><div class="t" style="left:1304.9px;top:786px;font-size:10.5px;line-height:10.5px;color:#e0282e;letter-spacing:0.55px;transform-origin:0 0;transform:rotate(-90deg) translate(-100%,-50%);">00:00</div><div class="t" style="left:1341.9px;top:786px;font-size:8.5px;line-height:8.5px;color:#1f2c33;letter-spacing:0.64px;transform-origin:0 0;transform:rotate(-90deg) translate(-100%,-50%);">00:30</div><div class="t" style="left:1378.9px;top:786px;font-size:10.5px;line-height:10.5px;color:#e0282e;letter-spacing:0.55px;transform-origin:0 0;transform:rotate(-90deg) translate(-100%,-50%);">01:00</div><div class="t" style="left:1415.9px;top:786px;font-size:8.5px;line-height:8.5px;color:#1f2c33;letter-spacing:0.64px;transform-origin:0 0;transform:rotate(-90deg) translate(-100%,-50%);">01:30</div><div class="t" style="left:1452.9px;top:786px;font-size:10.5px;line-height:10.5px;color:#e0282e;letter-spacing:0.55px;transform-origin:0 0;transform:rotate(-90deg) translate(-100%,-50%);">02:00</div><div class="t" style="left:1490.9px;top:786px;font-size:8.5px;line-height:8.5px;color:#1f2c33;letter-spacing:0.64px;transform-origin:0 0;transform:rotate(-90deg) translate(-100%,-50%);">02:30</div><div class="t" style="left:1527.9px;top:786px;font-size:10.5px;line-height:10.5px;color:#e0282e;letter-spacing:0.55px;transform-origin:0 0;transform:rotate(-90deg) translate(-100%,-50%);">03:00</div><div class="t" style="left:1564.9px;top:786px;font-size:8.5px;line-height:8.5px;color:#1f2c33;letter-spacing:0.64px;transform-origin:0 0;transform:rotate(-90deg) translate(-100%,-50%);">03:30</div><div class="t" style="left:1601.9px;top:786px;font-size:10.5px;line-height:10.5px;color:#e0282e;letter-spacing:0.55px;transform-origin:0 0;transform:rotate(-90deg) translate(-100%,-50%);">04:00</div><div class="t" style="left:1638.9px;top:786px;font-size:8.5px;line-height:8.5px;color:#1f2c33;letter-spacing:0.64px;transform-origin:0 0;transform:rotate(-90deg) translate(-100%,-50%);">04:30</div><div class="t" style="left:1675.9px;top:786px;font-size:10.5px;line-height:10.5px;color:#e0282e;letter-spacing:0.55px;transform-origin:0 0;transform:rotate(-90deg) translate(-100%,-50%);">05:00</div><div class="t" style="left:1712.9px;top:786px;font-size:8.5px;line-height:8.5px;color:#1f2c33;letter-spacing:0.64px;transform-origin:0 0;transform:rotate(-90deg) translate(-100%,-50%);">05:30</div><div class="t" style="left:1749.9px;top:786px;font-size:10.5px;line-height:10.5px;color:#e0282e;letter-spacing:0.55px;transform-origin:0 0;transform:rotate(-90deg) translate(-100%,-50%);">06:00</div><div class="t" style="left:1786.9px;top:786px;font-size:8.5px;line-height:8.5px;color:#1f2c33;letter-spacing:0.64px;transform-origin:0 0;transform:rotate(-90deg) translate(-100%,-50%);">06:30</div><div class="t" style="left:1824.9px;top:786px;font-size:10.5px;line-height:10.5px;color:#e0282e;letter-spacing:0.55px;transform-origin:0 0;transform:rotate(-90deg) translate(-100%,-50%);">07:00</div><div class="t" style="left:1861.9px;top:786px;font-size:8.5px;line-height:8.5px;color:#1f2c33;letter-spacing:0.64px;transform-origin:0 0;transform:rotate(-90deg) translate(-100%,-50%);">07:30</div><div class="t" style="left:97.9px;top:786px;font-size:10.5px;line-height:10.5px;color:#e0282e;letter-spacing:0.55px;transform-origin:0 0;transform:rotate(-90deg) translate(-100%,-50%);">12-03 07:44</div><div class="t" style="left:1879.4px;top:786px;font-size:10.5px;line-height:10.5px;color:#e0282e;letter-spacing:0.55px;transform-origin:0 0;transform:rotate(-90deg) translate(-100%,-50%);">12-04 07:44</div><div class="t" style="left:374px;top:859.43px;font-size:12px;line-height:12px;color:#1f2c33;font-weight:normal;letter-spacing:0.7px;">посл</div><div class="t" style="left:437px;top:859.43px;font-size:12px;line-height:12px;color:#1f2c33;font-weight:normal;letter-spacing:0.7px;">мин</div><div class="t" style="left:490px;top:859.43px;font-size:12px;line-height:12px;color:#1f2c33;font-weight:normal;letter-spacing:0.7px;">сред</div><div class="t" style="left:541px;top:859.43px;font-size:12px;line-height:12px;color:#1f2c33;font-weight:normal;letter-spacing:0.7px;">макс</div><div class="r" style="left:22px;top:873px;width:11px;height:11px;background:#22a522;box-sizing:border-box;border:1px solid #0a3a0a;"></div><div class="t" style="left:38.5px;top:872.93px;font-size:12px;line-height:12px;color:#1f2c33;font-weight:normal;letter-spacing:0.7px;">Processor load (1 min average per core)</div><div class="t" style="left:311px;top:872.93px;font-size:12px;line-height:12px;color:#1f2c33;font-weight:normal;letter-spacing:0.7px;">[сред]</div><div class="t" style="right:1514.5px;top:872.93px;font-size:12px;line-height:12px;color:#1f2c33;font-weight:normal;letter-spacing:0.7px;margin-right:-0.7px;">0.495</div><div class="t" style="right:1451px;top:872.93px;font-size:12px;line-height:12px;color:#1f2c33;font-weight:normal;letter-spacing:0.7px;margin-right:-0.7px;">0</div><div class="t" style="right:1400px;top:872.93px;font-size:12px;line-height:12px;color:#1f2c33;font-weight:normal;letter-spacing:0.7px;margin-right:-0.7px;">1.49</div><div class="t" style="right:1349px;top:872.93px;font-size:12px;line-height:12px;color:#1f2c33;font-weight:normal;letter-spacing:0.7px;margin-right:-0.7px;">8.13</div><div class="r" style="left:22px;top:887px;width:11px;height:11px;background:#2222aa;box-sizing:border-box;border:1px solid #0a0a3a;"></div><div class="t" style="left:38.5px;top:886.93px;font-size:12px;line-height:12px;color:#1f2c33;font-weight:normal;letter-spacing:0.7px;">Processor load (5 min average per core)</div><div class="t" style="left:311px;top:886.93px;font-size:12px;line-height:12px;color:#1f2c33;font-weight:normal;letter-spacing:0.7px;">[сред]</div><div class="t" style="right:1514.5px;top:886.93px;font-size:12px;line-height:12px;color:#1f2c33;font-weight:normal;letter-spacing:0.7px;margin-right:-0.7px;">1.06</div><div class="t" style="right:1451px;top:886.93px;font-size:12px;line-height:12px;color:#1f2c33;font-weight:normal;letter-spacing:0.7px;margin-right:-0.7px;">0.0875</div><div class="t" style="right:1400px;top:886.93px;font-size:12px;line-height:12px;color:#1f2c33;font-weight:normal;letter-spacing:0.7px;margin-right:-0.7px;">1.48</div><div class="t" style="right:1349px;top:886.93px;font-size:12px;line-height:12px;color:#1f2c33;font-weight:normal;letter-spacing:0.7px;margin-right:-0.7px;">4.99</div><div class="r" style="left:22px;top:901px;width:11px;height:11px;background:#a82222;box-sizing:border-box;border:1px solid #3a0a0a;"></div><div class="t" style="left:38.5px;top:900.93px;font-size:12px;line-height:12px;color:#1f2c33;font-weight:normal;letter-spacing:0.7px;">Processor load (15 min average per core)</div><div class="t" style="left:311px;top:900.93px;font-size:12px;line-height:12px;color:#1f2c33;font-weight:normal;letter-spacing:0.7px;">[сред]</div><div class="t" style="right:1514.5px;top:900.93px;font-size:12px;line-height:12px;color:#1f2c33;font-weight:normal;letter-spacing:0.7px;margin-right:-0.7px;">1.37</div><div class="t" style="right:1451px;top:900.93px;font-size:12px;line-height:12px;color:#1f2c33;font-weight:normal;letter-spacing:0.7px;margin-right:-0.7px;">0.34</div><div class="t" style="right:1400px;top:900.93px;font-size:12px;line-height:12px;color:#1f2c33;font-weight:normal;letter-spacing:0.7px;margin-right:-0.7px;">1.46</div><div class="t" style="right:1349px;top:900.93px;font-size:12px;line-height:12px;color:#1f2c33;font-weight:normal;letter-spacing:0.7px;margin-right:-0.7px;">2.82</div><svg style="left:21px;top:919px" width="13" height="13"><circle cx="6.5" cy="6.5" r="5.2" fill="#ffdd99" stroke="#111" stroke-width="1"/></svg><div class="t" style="left:37px;top:919.93px;font-size:12px;line-height:12px;color:#1f2c33;font-weight:normal;letter-spacing:0.7px;">Триггер: Processor load is too high on 172.16.3.190 (Web, PostgreSQL, OpenSCADA)</div><div class="t" style="left:577px;top:919.93px;font-size:12px;line-height:12px;color:#1f2c33;font-weight:normal;letter-spacing:0.7px;">[&gt; 10]</div>
</body></html>
